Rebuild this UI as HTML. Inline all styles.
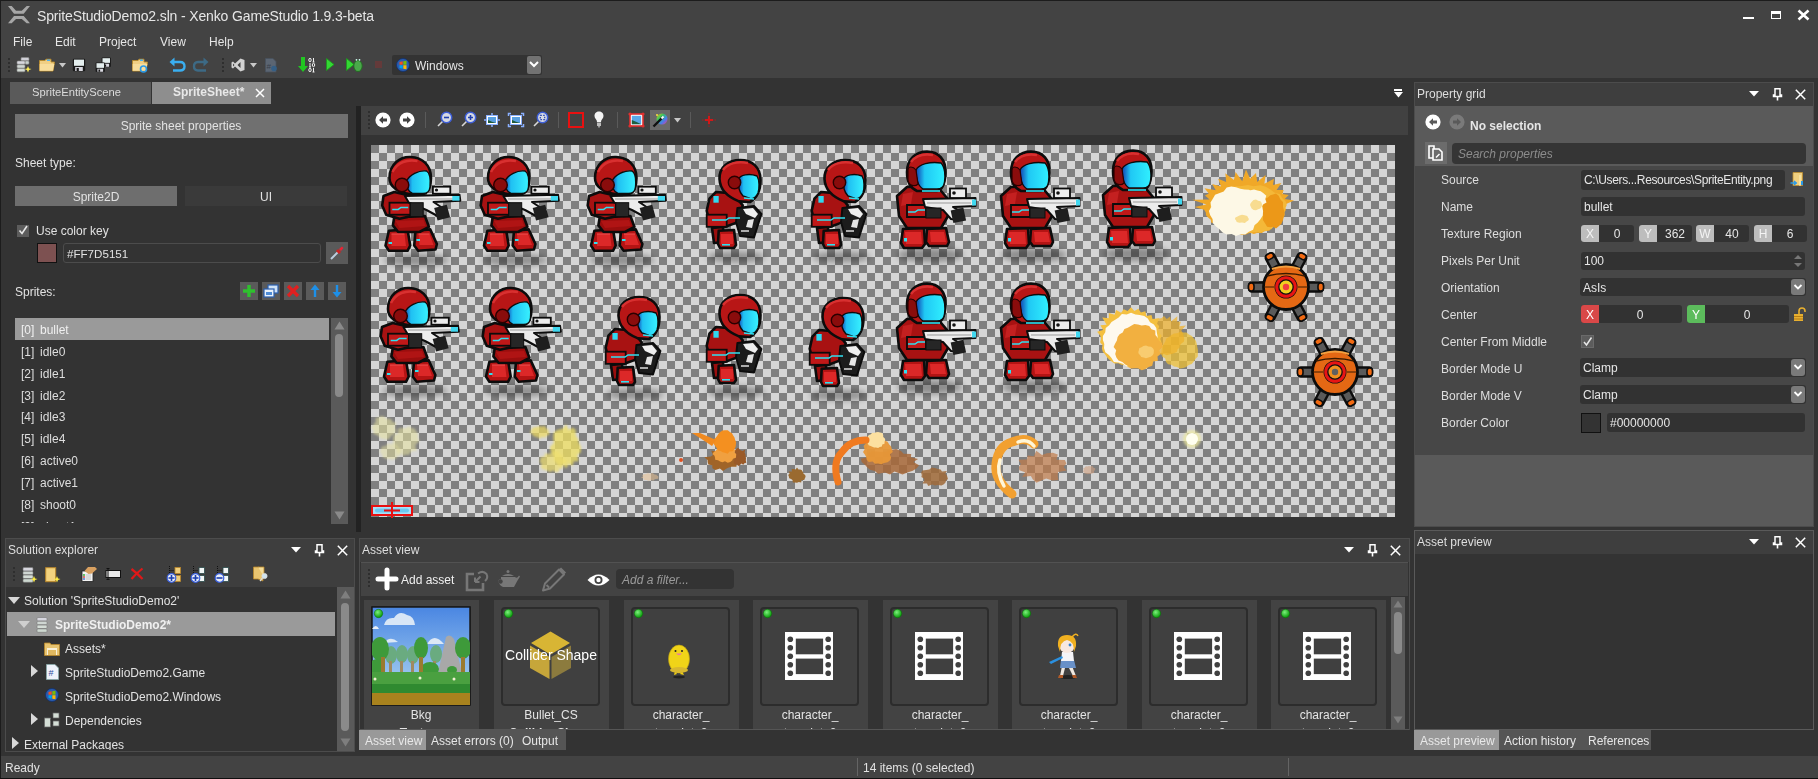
<!DOCTYPE html>
<html><head><meta charset="utf-8">
<style>
*{box-sizing:border-box;margin:0;padding:0}
html,body{width:1818px;height:779px;overflow:hidden;background:#333333;font-family:"Liberation Sans",sans-serif;font-size:12px;color:#e2e2e2;position:relative}
.a{position:absolute}
.t{position:absolute;white-space:nowrap;will-change:transform}
svg{position:absolute;overflow:visible}
</style></head><body>
<div class="a" style="left:0px;top:0px;width:1818px;height:78px;background:#434343;"></div>
<div class="a" style="left:0px;top:0px;width:1818px;height:1px;background:#1c1c1c;"></div>
<div class="a" style="left:0px;top:0px;width:1px;height:779px;background:#1c1c1c;"></div>
<div class="a" style="left:0px;top:778px;width:1818px;height:1px;background:#0e0e0e;"></div>
<svg style="left:0;top:0" width="40" height="30" viewBox="0 0 40 30"><path d="M8 6 H11.7 L16 10.8 H21.8 L26.7 6 H30 L23.7 13.8 H14Z M14 16 H23.7 L30 23.3 H26.7 L21.8 19 H16 L11.7 23.3 H8Z" fill="#a6a6a6"/></svg>
<div class="t" style="top:8.25px;font-size:14px;line-height:17px;color:#e6e6e6;left:37px;letter-spacing:-0.14px">SpriteStudioDemo2.sln - Xenko GameStudio 1.9.3-beta</div>
<div class="a" style="left:1743px;top:17px;width:11px;height:2px;background:#ffffff;"></div>
<div class="a" style="left:1771px;top:11px;width:10px;height:8px;background:transparent;border:1px solid #fff;border-top-width:3px"></div>
<svg style="left:1797px;top:9px" width="13" height="12" viewBox="0 0 13 12"><path d="M1.5 1.5 L11.5 10.5 M11.5 1.5 L1.5 10.5" stroke="#fff" stroke-width="2.6"/></svg>
<div class="t" style="top:34.84px;font-size:12px;line-height:14px;color:#e6e6e6;left:13px;">File</div>
<div class="t" style="top:34.84px;font-size:12px;line-height:14px;color:#e6e6e6;left:55px;">Edit</div>
<div class="t" style="top:34.84px;font-size:12px;line-height:14px;color:#e6e6e6;left:99px;">Project</div>
<div class="t" style="top:34.84px;font-size:12px;line-height:14px;color:#e6e6e6;left:160px;">View</div>
<div class="t" style="top:34.84px;font-size:12px;line-height:14px;color:#e6e6e6;left:209px;">Help</div>
<div class="a" style="left:1px;top:756px;width:1817px;height:22px;background:#434343;"></div>
<div class="a" style="left:857px;top:758px;width:1px;height:18px;background:#646464;"></div>
<div class="a" style="left:1288px;top:758px;width:1px;height:18px;background:#646464;"></div>
<div class="t" style="top:760.84px;font-size:12px;line-height:14px;color:#e2e2e2;left:5px;">Ready</div>
<div class="t" style="top:760.84px;font-size:12px;line-height:14px;color:#e2e2e2;left:863px;">14 items (0 selected)</div>
<div class="a" style="left:10px;top:82px;width:141px;height:22px;background:#5a5a5a;"></div>
<div class="a" style="left:152px;top:82px;width:119px;height:22px;background:#8e8e8e;"></div>
<div class="t" style="top:84.84px;font-size:12px;line-height:14px;color:#dcdcdc;left:32px;font-size:11.2px">SpriteEntityScene</div>
<div class="t" style="top:84.84px;font-size:12px;line-height:14px;color:#e8e8e8;font-weight:bold;left:173px;">SpriteSheet*</div>
<svg style="left:255px;top:88px" width="10" height="10" viewBox="0 0 10 10"><path d="M1 1 L9 9 M9 1 L1 9" stroke="#fff" stroke-width="1.5"/></svg>
<div class="a" style="left:1394px;top:89px;width:8px;height:2px;background:#ffffff;"></div>
<svg style="left:1394px;top:92px" width="9" height="6" viewBox="0 0 9 6"><path d="M0 0 H9 L4.5 5.5Z" fill="#fff"/></svg>
<div class="a" style="left:8px;top:58px;width:2px;height:2px;background:#2e2e2e;"></div>
<div class="a" style="left:8px;top:62px;width:2px;height:2px;background:#2e2e2e;"></div>
<div class="a" style="left:8px;top:66px;width:2px;height:2px;background:#2e2e2e;"></div>
<div class="a" style="left:8px;top:70px;width:2px;height:2px;background:#2e2e2e;"></div>
<svg style="left:16px;top:57px" width="16" height="16" viewBox="0 0 16 16">
<rect x="5" y="0.5" width="8" height="3.2" rx="1" fill="#cfcfd6" stroke="#888" stroke-width="0.6"/>
<rect x="9" y="4" width="4" height="3.2" rx="1" fill="#c9d2cf" stroke="#888" stroke-width="0.6"/>
<rect x="1" y="4" width="8" height="3.2" rx="1" fill="#d8d8de" stroke="#888" stroke-width="0.6"/>
<rect x="1" y="7.8" width="8" height="3.2" rx="1" fill="#cfd6d2" stroke="#888" stroke-width="0.6"/>
<rect x="1" y="11.6" width="8" height="3.2" rx="1" fill="#d4dcd6" stroke="#888" stroke-width="0.6"/>
<path d="M12 9 L13 11.5 L15.5 12 L13 13 L12 15.5 L11 13 L8.5 12 L11 11.5Z" fill="#ffee55"/>
</svg>
<svg style="left:39px;top:58px" width="16" height="14" viewBox="0 0 16 14"><path d="M0.5 2.5 H6 L7 1.2 H12 V4 H15.5 L14 13 H0.5Z" fill="#f0cf84" stroke="#b88a2a" stroke-width="0.9"/><path d="M0.7 6 H15.3 L14 12.8 H0.7Z" fill="#f7dd9c"/><rect x="8" y="1.5" width="3" height="1.5" fill="#4ab0f0"/></svg>
<svg style="left:59px;top:63px" width="7" height="5" viewBox="0 0 7 5"><path d="M0 0 H7 L3.5 4.5Z" fill="#c8c8c8"/></svg>
<svg style="left:72px;top:58px" width="14" height="14" viewBox="0 0 14 14"><rect x="0.8" y="0.8" width="12.4" height="12.4" rx="1.2" fill="#1a1a1a"/><rect x="2" y="1.6" width="10" height="6.2" fill="#e4eeee"/><rect x="3.2" y="9" width="7.6" height="4" fill="#d8d8e0"/><rect x="4.6" y="10" width="2.2" height="3" fill="#1a1a1a"/></svg>
<svg style="left:95px;top:57px" width="16" height="16" viewBox="0 0 16 16"><g transform="translate(6,0) scale(0.75)"><rect x="0.8" y="0.8" width="12.4" height="12.4" rx="1.2" fill="#1a1a1a"/><rect x="2" y="1.6" width="10" height="6.2" fill="#e4eeee"/><rect x="3.2" y="9" width="7.6" height="4" fill="#d8d8e0"/><rect x="4.6" y="10" width="2.2" height="3" fill="#1a1a1a"/></g><g transform="translate(0,5) scale(0.75)"><rect x="0.8" y="0.8" width="12.4" height="12.4" rx="1.2" fill="#1a1a1a"/><rect x="2" y="1.6" width="10" height="6.2" fill="#e4eeee"/><rect x="3.2" y="9" width="7.6" height="4" fill="#d8d8e0"/><rect x="4.6" y="10" width="2.2" height="3" fill="#1a1a1a"/></g></svg>
<svg style="left:132px;top:58px" width="16" height="15" viewBox="0 0 16 15"><path d="M0.5 2.5 H6 L7 1.2 H12 V4 H15.5 L14 13 H0.5Z" fill="#f0cf84" stroke="#b88a2a" stroke-width="0.9"/><path d="M0.7 6 H15.3 L14 12.8 H0.7Z" fill="#f7dd9c"/><rect x="8" y="1.5" width="3" height="1.5" fill="#4ab0f0"/><circle cx="11.5" cy="11" r="3" fill="none" stroke="#2a9ae8" stroke-width="1.6"/></svg>
<svg style="left:169px;top:57px" width="17" height="15" viewBox="0 0 17 15"><path d="M4 5 H11 Q15.5 5 15.5 9.5 Q15.5 13.5 11 13.5 H4" fill="none" stroke="#3aaef0" stroke-width="2.4"/><path d="M0.5 5 L5.5 0.5 V9.5Z" fill="#3aaef0"/></svg>
<svg style="left:193px;top:57px" width="16" height="15" viewBox="0 0 16 15"><path d="M12 5 H5 Q1 5 1 9.5 Q1 13.5 5 13.5 H13" fill="none" stroke="#3d6a85" stroke-width="2.4"/><path d="M15.5 5 L10.5 0.5 V9.5Z" fill="#3d6a85"/></svg>
<div class="a" style="left:222px;top:58px;width:2px;height:2px;background:#2e2e2e;"></div>
<div class="a" style="left:222px;top:62px;width:2px;height:2px;background:#2e2e2e;"></div>
<div class="a" style="left:222px;top:66px;width:2px;height:2px;background:#2e2e2e;"></div>
<div class="a" style="left:222px;top:70px;width:2px;height:2px;background:#2e2e2e;"></div>
<svg style="left:231px;top:58px" width="14" height="14" viewBox="0 0 14 14"><path d="M9.5 0.5 L13.5 2 V12 L9.5 13.5 L4 8.5 L2 10.5 L0.5 9.5 V4.5 L2 3.5 L4 5.5Z M9.5 4 L6.5 7 L9.5 10Z M2 5.5 V8.5 L3.5 7Z" fill="#d2d2d2" fill-rule="evenodd"/></svg>
<svg style="left:250px;top:63px" width="7" height="5" viewBox="0 0 7 5"><path d="M0 0 H7 L3.5 4.5Z" fill="#c8c8c8"/></svg>
<svg style="left:265px;top:58px" width="13" height="15" viewBox="0 0 13 15"><path d="M0.5 0.5 H8 L11 3.5 V14 H0.5Z" fill="#5b6572" stroke="#48525e" stroke-width="0.8"/><text x="1.5" y="11" font-size="8" font-family="Liberation Sans" fill="#38404a">#</text><circle cx="9" cy="10.5" r="2.8" fill="#345f86"/></svg>
<svg style="left:298px;top:57px" width="18" height="16" viewBox="0 0 18 16"><path d="M3 0 H7 V9 H10 L5 15 L0 9 H3Z" fill="#22c622"/><ellipse cx="12" cy="3" rx="1.2" ry="1.7" fill="none" stroke="#f0f0f0" stroke-width="1"/><path d="M15.5 1 V5 M14.5 5 H16.5" stroke="#f0f0f0" stroke-width="1"/><path d="M12 6 V10 M11 10 H13" stroke="#f0f0f0" stroke-width="1"/><ellipse cx="15.5" cy="8" rx="1.2" ry="1.7" fill="none" stroke="#f0f0f0" stroke-width="1"/><ellipse cx="12" cy="13" rx="1.2" ry="1.7" fill="none" stroke="#f0f0f0" stroke-width="1"/><path d="M15.5 11 V15 M14.5 15 H16.5" stroke="#f0f0f0" stroke-width="1"/></svg>
<svg style="left:326px;top:58px" width="9" height="13" viewBox="0 0 9 13"><path d="M0.5 0.5 L8 6.5 L0.5 12.5Z" fill="#34d834" stroke="#1a9a1a" stroke-width="0.8"/></svg>
<svg style="left:346px;top:58px" width="18" height="14" viewBox="0 0 18 14"><path d="M0.5 0.5 L8 6.5 L0.5 12.5Z" fill="#34d834" stroke="#1a9a1a" stroke-width="0.8"/><ellipse cx="12" cy="8" rx="4.2" ry="5.5" fill="#4aa84a" stroke="#1f6a1f" stroke-width="0.9"/><circle cx="10.5" cy="1.8" r="0.9" fill="#cfe"/><circle cx="13.5" cy="1.8" r="0.9" fill="#cfe"/></svg>
<div class="a" style="left:375px;top:61px;width:7px;height:7px;background:#643a3a;"></div>
<div class="a" style="left:392px;top:55px;width:150px;height:20px;background:#333333;border-radius:2px"></div>
<svg style="left:396px;top:58px" width="14" height="14" viewBox="0 0 14 14"><circle cx="7" cy="7" r="6.5" fill="#2a5db0" stroke="#12306a" stroke-width="0.8"/><path d="M3.5 4 L6.7 3.3 V6.7 H3.5Z" fill="#f25022"/><path d="M7.3 3.2 L10.5 2.8 V6.7 H7.3Z" fill="#7fba00"/><path d="M3.5 7.3 H6.7 V10.7 L3.5 10Z" fill="#00a4ef"/><path d="M7.3 7.3 H10.5 V11.2 L7.3 10.8Z" fill="#ffb900"/></svg>
<div class="t" style="top:58.84px;font-size:12px;line-height:14px;color:#e6e6e6;left:415px;">Windows</div>
<div class="a" style="left:527px;top:56px;width:14px;height:18px;background:#727272;border-radius:2px"></div>
<svg style="left:529px;top:61px" width="10" height="7" viewBox="0 0 10 7"><path d="M1 1 L5 5 L9 1" stroke="#fff" stroke-width="2" fill="none"/></svg>
<div class="a" style="left:15px;top:114px;width:333px;height:24px;background:#707070;"></div>
<div class="t" style="top:118.84px;font-size:12px;line-height:14px;color:#e2e2e2;left:-19px;width:400px;text-align:center;">Sprite sheet properties</div>
<div class="t" style="top:155.84px;font-size:12px;line-height:14px;color:#e2e2e2;left:15px;">Sheet type:</div>
<div class="a" style="left:15px;top:186px;width:162px;height:20px;background:#6e6e6e;"></div>
<div class="t" style="top:189.84px;font-size:12px;line-height:14px;color:#e2e2e2;left:-104px;width:400px;text-align:center;">Sprite2D</div>
<div class="a" style="left:185px;top:186px;width:162px;height:20px;background:#3a3a3a;"></div>
<div class="t" style="top:189.84px;font-size:12px;line-height:14px;color:#e2e2e2;left:66px;width:400px;text-align:center;">UI</div>
<div class="a" style="left:17px;top:225px;width:12px;height:12px;background:#5c5c5c;"></div>
<svg style="left:17px;top:224px" width="12" height="12" viewBox="0 0 12 12"><path d="M2.5 6.5 L5 9.5 L10 2" stroke="#e8e8e8" stroke-width="1.6" fill="none"/></svg>
<div class="t" style="top:223.84px;font-size:12px;line-height:14px;color:#e2e2e2;left:36px;">Use color key</div>
<div class="a" style="left:37px;top:243px;width:20px;height:20px;background:#7d5151;border:1px solid #111"></div>
<div class="a" style="left:63px;top:243px;width:258px;height:20px;background:#333333;border:1px solid #4c4c4c;border-radius:3px"></div>
<div class="t" style="top:246.84px;font-size:12px;line-height:14px;color:#e2e2e2;left:67px;font-size:11.6px">#FF7D5151</div>
<div class="a" style="left:326px;top:242px;width:22px;height:22px;background:#5a5a5a;"></div>
<svg style="left:329px;top:245px" width="16" height="16" viewBox="0 0 16 16"><path d="M2 14 L9 7" stroke="#bcd" stroke-width="2"/><path d="M8 5 L11 8" stroke="#c22" stroke-width="3"/><path d="M10 4 L13 1.5 L14.5 3 L12 6Z" fill="#e23"/></svg>
<div class="t" style="top:284.84px;font-size:12px;line-height:14px;color:#e2e2e2;left:15px;">Sprites:</div>
<div class="a" style="left:240px;top:282px;width:18px;height:18px;background:#5a5a5a;"></div>
<div class="a" style="left:262px;top:282px;width:18px;height:18px;background:#5a5a5a;"></div>
<div class="a" style="left:284px;top:282px;width:18px;height:18px;background:#5a5a5a;"></div>
<div class="a" style="left:306px;top:282px;width:18px;height:18px;background:#5a5a5a;"></div>
<div class="a" style="left:328px;top:282px;width:18px;height:18px;background:#5a5a5a;"></div>
<svg style="left:240px;top:282px" width="18" height="18" viewBox="0 0 18 18"><path d="M9 3 V15 M3 9 H15" stroke="#2ec02e" stroke-width="3.5"/></svg>
<svg style="left:262px;top:282px" width="18" height="18" viewBox="0 0 18 18"><rect x="6" y="3" width="10" height="8" fill="#cfe2f7" stroke="#2a5fb0" stroke-width="1.2"/><rect x="2" y="7" width="10" height="8" fill="#e8f1fb" stroke="#2a5fb0" stroke-width="1.2"/><rect x="4" y="10" width="6" height="3" fill="#4d8bd6"/></svg>
<svg style="left:284px;top:282px" width="18" height="18" viewBox="0 0 18 18"><path d="M4 4 L14 14 M14 4 L4 14" stroke="#e02020" stroke-width="3.2"/></svg>
<svg style="left:306px;top:282px" width="18" height="18" viewBox="0 0 18 18"><path d="M9 15 V6" stroke="#1e90e8" stroke-width="2.4"/><path d="M4.5 8 L9 2.5 L13.5 8Z" fill="#1e90e8"/></svg>
<svg style="left:328px;top:282px" width="18" height="18" viewBox="0 0 18 18"><path d="M9 3 V12" stroke="#1e90e8" stroke-width="2.4"/><path d="M4.5 10 L9 15.5 L13.5 10Z" fill="#1e90e8"/></svg>
<div class="a" style="left:15px;top:318px;width:314px;height:22px;background:#9a9a9a;"></div>
<div class="t" style="top:322.84px;font-size:12px;line-height:14px;color:#f0f0f0;left:21px;">[0]</div>
<div class="t" style="top:322.84px;font-size:12px;line-height:14px;color:#f0f0f0;left:40px;">bullet</div>
<div class="t" style="top:344.74px;font-size:12px;line-height:14px;color:#dedede;left:21px;">[1]</div>
<div class="t" style="top:344.74px;font-size:12px;line-height:14px;color:#dedede;left:40px;">idle0</div>
<div class="t" style="top:366.64px;font-size:12px;line-height:14px;color:#dedede;left:21px;">[2]</div>
<div class="t" style="top:366.64px;font-size:12px;line-height:14px;color:#dedede;left:40px;">idle1</div>
<div class="t" style="top:388.54px;font-size:12px;line-height:14px;color:#dedede;left:21px;">[3]</div>
<div class="t" style="top:388.54px;font-size:12px;line-height:14px;color:#dedede;left:40px;">idle2</div>
<div class="t" style="top:410.44px;font-size:12px;line-height:14px;color:#dedede;left:21px;">[4]</div>
<div class="t" style="top:410.44px;font-size:12px;line-height:14px;color:#dedede;left:40px;">idle3</div>
<div class="t" style="top:432.34px;font-size:12px;line-height:14px;color:#dedede;left:21px;">[5]</div>
<div class="t" style="top:432.34px;font-size:12px;line-height:14px;color:#dedede;left:40px;">idle4</div>
<div class="t" style="top:454.24px;font-size:12px;line-height:14px;color:#dedede;left:21px;">[6]</div>
<div class="t" style="top:454.24px;font-size:12px;line-height:14px;color:#dedede;left:40px;">active0</div>
<div class="t" style="top:476.14px;font-size:12px;line-height:14px;color:#dedede;left:21px;">[7]</div>
<div class="t" style="top:476.14px;font-size:12px;line-height:14px;color:#dedede;left:40px;">active1</div>
<div class="t" style="top:498.04px;font-size:12px;line-height:14px;color:#dedede;left:21px;">[8]</div>
<div class="t" style="top:498.04px;font-size:12px;line-height:14px;color:#dedede;left:40px;">shoot0</div>
<div class="t" style="top:519.94px;font-size:12px;line-height:14px;color:#dedede;left:21px;">[9]</div>
<div class="t" style="top:519.94px;font-size:12px;line-height:14px;color:#dedede;left:40px;">shoot1</div>
<div class="a" style="left:8px;top:523px;width:322px;height:14px;background:#333333;"></div>
<div class="a" style="left:331px;top:318px;width:17px;height:206px;background:#5a5a5a;"></div>
<svg style="left:334px;top:321px" width="11" height="9" viewBox="0 0 11 9"><path d="M0.5 8.5 L5.5 0.5 L10.5 8.5Z" fill="#8a8a8a"/></svg>
<svg style="left:334px;top:511px" width="11" height="9" viewBox="0 0 11 9"><path d="M0.5 0.5 L5.5 8.5 L10.5 0.5Z" fill="#8a8a8a"/></svg>
<div class="a" style="left:335px;top:334px;width:8px;height:63px;background:#8a8a8a;border-radius:4px"></div>
<div class="a" style="left:356px;top:106px;width:5px;height:426px;background:#222222;"></div>
<div class="a" style="left:361px;top:106px;width:1047px;height:29px;background:#414141;"></div>
<div class="a" style="left:371px;top:145px;width:1024px;height:372px;background:#d3d3d3;background:conic-gradient(#d5d5d5 0 25%,#808080 0 50%,#d5d5d5 0 75%,#808080 0) 0 0/16px 16px"></div>
<div class="a" style="left:368px;top:111px;width:2px;height:2px;background:#2e2e2e;"></div>
<div class="a" style="left:368px;top:115px;width:2px;height:2px;background:#2e2e2e;"></div>
<div class="a" style="left:368px;top:119px;width:2px;height:2px;background:#2e2e2e;"></div>
<div class="a" style="left:368px;top:123px;width:2px;height:2px;background:#2e2e2e;"></div>
<div class="a" style="left:368px;top:127px;width:2px;height:2px;background:#2e2e2e;"></div>
<svg style="left:375px;top:112px" width="16" height="16" viewBox="0 0 16 16"><circle cx="8" cy="8" r="7.6" fill="#ffffff"/><path d="M4 8 L8 4.2 V6.6 H12 V9.4 H8 V11.8Z" fill="#414141"/></svg>
<svg style="left:399px;top:112px" width="16" height="16" viewBox="0 0 16 16"><circle cx="8" cy="8" r="7.6" fill="#ffffff"/><path d="M12 8 L8 4.2 V6.6 H4 V9.4 H8 V11.8Z" fill="#414141"/></svg>
<div class="a" style="left:425px;top:112px;width:1px;height:16px;background:#5a5a5a;"></div>
<svg style="left:437px;top:111px" width="16" height="16" viewBox="0 0 16 16"><path d="M1 15 L6 10" stroke="#d8d8d8" stroke-width="1.6"/><circle cx="9.5" cy="6.5" r="5.2" fill="#d6d9e3" stroke="#3e5fd8" stroke-width="1.5"/><path d="M7 6.5 H12" stroke="#2040b0" stroke-width="1.6"/></svg>
<svg style="left:461px;top:111px" width="16" height="16" viewBox="0 0 16 16"><path d="M1 15 L6 10" stroke="#d8d8d8" stroke-width="1.6"/><circle cx="9.5" cy="6.5" r="5.2" fill="#d6d9e3" stroke="#3e5fd8" stroke-width="1.5"/><path d="M7 6.5 H12 M9.5 4 V9" stroke="#2040b0" stroke-width="1.6"/></svg>
<svg style="left:484px;top:113px" width="16" height="14" viewBox="0 0 16 14"><rect x="2.5" y="2.5" width="11" height="9" fill="#fff" stroke="#8ab0ff" stroke-width="1"/><path d="M4 4 H12 V10 H4Z" fill="#5aa0e0"/><path d="M4 7 Q8 9 12 10 H4Z" fill="#1f5a3a"/><path d="M8 0 V2.5 M8 11.5 V14 M0 7 H2.5 M13.5 7 H16" stroke="#8ab0ff" stroke-width="1.5"/></svg>
<svg style="left:508px;top:113px" width="16" height="14" viewBox="0 0 16 14"><rect x="2.5" y="2.5" width="11" height="9" fill="#fff" stroke="#8ab0ff" stroke-width="1"/><path d="M4 4 H12 V10 H4Z" fill="#5aa0e0"/><path d="M4 7 Q8 9 12 10 H4Z" fill="#1f5a3a"/><path d="M0.5 3 V0.5 H3 M13 0.5 H15.5 V3 M0.5 11 V13.5 H3 M13 13.5 H15.5 V11" stroke="#8ab0ff" stroke-width="1.5" fill="none"/></svg>
<svg style="left:533px;top:111px" width="16" height="16" viewBox="0 0 16 16"><path d="M1 15 L6 10" stroke="#d8d8d8" stroke-width="1.6"/><circle cx="9.5" cy="6.5" r="5.2" fill="#d6d9e3" stroke="#3e5fd8" stroke-width="1.5"/><rect x="7.3" y="4.3" width="4.4" height="4.4" fill="none" stroke="#2040b0" stroke-width="1.2" stroke-dasharray="1.5 1.4"/></svg>
<div class="a" style="left:558px;top:112px;width:1px;height:16px;background:#5a5a5a;"></div>
<div class="a" style="left:568px;top:112px;width:16px;height:16px;background:transparent;border:2px solid #e81010"></div>
<svg style="left:594px;top:111px" width="10" height="17" viewBox="0 0 10 17"><path d="M5 0.5 C8.5 0.5 9.5 3 9.5 5 C9.5 7.5 7 8.5 7 11 H3 C3 8.5 0.5 7.5 0.5 5 C0.5 3 1.5 0.5 5 0.5Z" fill="#f4f4f4"/><rect x="3" y="11.5" width="4" height="3.5" fill="#bbb"/><rect x="4" y="15" width="2" height="1.5" fill="#999"/></svg>
<div class="a" style="left:617px;top:112px;width:1px;height:16px;background:#5a5a5a;"></div>
<svg style="left:628px;top:112px" width="17" height="16" viewBox="0 0 17 16"><rect x="2" y="2" width="13" height="12" fill="#fff" stroke="#e03030" stroke-width="1.6"/><path d="M3.8 3.8 H13.2 V12.2 H3.8Z" fill="#5aa8e8"/><path d="M3.8 8 Q9 10 13.2 12.2 H3.8Z" fill="#1e5f40"/><circle cx="2" cy="2" r="1.6" fill="#e03030"/><circle cx="15" cy="2" r="1.6" fill="#e03030"/><circle cx="2" cy="14" r="1.6" fill="#e03030"/><circle cx="15" cy="14" r="1.6" fill="#e03030"/></svg>
<div class="a" style="left:650px;top:110px;width:20px;height:20px;background:#6a6a6a;"></div>
<svg style="left:652px;top:112px" width="16" height="16" viewBox="0 0 16 16"><defs><linearGradient id="rb" x1="0" y1="0" x2="1" y2="1"><stop offset="0" stop-color="#ffd000"/><stop offset="0.35" stop-color="#30d060"/><stop offset="0.65" stop-color="#4080ff"/><stop offset="1" stop-color="#ff3090"/></linearGradient></defs><circle cx="10" cy="7" r="5.5" fill="url(#rb)" opacity="0.9"/><path d="M1.5 14.5 L11 5" stroke="#111" stroke-width="2.4"/><path d="M9.5 6.5 L11.5 4.5" stroke="#fff" stroke-width="2"/><circle cx="5" cy="3" r="1" fill="#ffe040"/></svg>
<svg style="left:674px;top:118px" width="7" height="5" viewBox="0 0 7 5"><path d="M0 0 H7 L3.5 4.5Z" fill="#c8c8c8"/></svg>
<div class="a" style="left:690px;top:112px;width:1px;height:16px;background:#5a5a5a;"></div>
<svg style="left:701px;top:112px" width="16" height="16" viewBox="0 0 16 16"><path d="M8 1 V15 M1 8 H15" stroke="#b01818" stroke-width="1" stroke-dasharray="1.5 1"/><path d="M8 4 V12 M4 8 H12" stroke="#d01818" stroke-width="2"/></svg>
<svg style="left:371px;top:145px" width="1024" height="372" viewBox="0 0 1024 372"><defs><filter id="blur" x="-50%" y="-200%" width="200%" height="500%"><feGaussianBlur stdDeviation="3"/></filter><filter id="blur2"><feGaussianBlur stdDeviation="1.2"/></filter><linearGradient id="vis2" x1="0" y1="0" x2="1" y2="0"><stop offset="0" stop-color="#1040b0"/><stop offset="0.3" stop-color="#20c8f4"/><stop offset="1" stop-color="#30f0ff"/></linearGradient><symbol id="shoot" viewBox="0 0 90 110" width="90" height="110" overflow="visible">
<ellipse cx="37" cy="108" rx="33" ry="6" fill="#000" opacity="0.32" filter="url(#blur)"/>
<g stroke="#0c0c0c" stroke-width="2.6" stroke-linejoin="round">
<path d="M9.4 78.8 L28 77.4 L30.7 93.5 L28 98.8 L9.4 98.8 L6 93.5Z" fill="#b41414"/>
<path d="M36 78.8 L50.7 77.4 L57.4 92 L56 97.5 L38.7 98.8 L34.7 93.5Z" fill="#b41414"/>
<path d="M14.7 65.4 L45.4 64 L49.4 74.8 L40 80 L18.7 80 L13.4 73.4Z" fill="#9a0e0e"/>
<path d="M4 44 L14.7 40 L26.7 42.7 L32 50.7 L32 64 L20 66.8 L6.7 62.7 L2.7 53.4Z" fill="#a81212"/>
<path d="M10 26 C10 12 21 4.5 31 5 C43 5.5 51.5 13 51.5 26 C51.5 35 48.5 41 44 42 L30 42 C19 40.5 10 35 10 26Z" fill="#b81616"/>
</g>
<path d="M13 20 C18 10 28 7 38 9" stroke="#d83030" stroke-width="2.5" fill="none"/>
<defs><linearGradient id="vis" x1="0" y1="0" x2="1" y2="0"><stop offset="0" stop-color="#1048b8"/><stop offset="0.25" stop-color="#20c0f2"/><stop offset="1" stop-color="#38f2ff"/></linearGradient></defs>
<path d="M27 29 C30 23 39 18 47 19 C50.5 21 51 29 50.5 35 C50 39.5 47.5 41.5 43.5 41.5 L33 41.5 C29 40 26.5 35 27 29Z" fill="url(#vis)" stroke="#0c0c0c" stroke-width="1.4"/>
<circle cx="22.5" cy="33" r="6.8" fill="#8a0c0c" stroke="#2a0000" stroke-width="1.4"/>
<path d="M12 82 H25 L26.5 94 H12Z M39 82 H50 L54 93 H40Z" fill="#dc2828"/>
<path d="M12 82 H25 M39 82 H50" stroke="#f05050" stroke-width="1.2"/>
<path d="M16 69 L44 68 L46 74 L20 76Z" fill="#b01414"/>
<rect x="10" y="50.7" width="21" height="12" fill="#c01818" stroke="#0c0c0c" stroke-width="1.8"/>
<path d="M12.7 57.4 H18.7 L21.4 55.4 H28.7" stroke="#30e0f0" stroke-width="1.5" fill="none"/>
<path d="M25.4 44 L80 42.7 L80.8 48.7 L54 50 L63 56 L58 64 L47 58 L29.4 50.7Z" fill="#ececec" stroke="#0c0c0c" stroke-width="2" stroke-linejoin="round"/>
<path d="M30 47 H76" stroke="#999" stroke-width="1"/>
<rect x="53.4" y="34.7" width="17.4" height="7" fill="#eeeeee" stroke="#0c0c0c" stroke-width="1.8"/>
<circle cx="57" cy="38" r="1.6" fill="#111"/>
<rect x="72.8" y="44" width="7.2" height="4.7" fill="#40d8f0"/>
<rect x="30.7" y="50.7" width="13" height="14" fill="#262626" stroke="#0c0c0c" stroke-width="1"/>
<rect x="56" y="54" width="13" height="13" fill="#1e1e1e" transform="rotate(-15 63 60)"/>
<rect x="9" y="90" width="3.5" height="2" fill="#30e0f0"/><rect x="37" y="87" width="3.5" height="2" fill="#30e0f0"/>
</symbol><symbol id="shoot2" viewBox="0 0 90 110" width="90" height="110" overflow="visible">
<ellipse cx="37" cy="109" rx="33" ry="7" fill="#000" opacity="0.34" filter="url(#blur)"/>
<g stroke="#0c0c0c" stroke-width="2.6" stroke-linejoin="round">
<path d="M10 83 L31 82 L32 98 L29 102 L11 102 L8 97Z" fill="#b41414"/>
<path d="M34 83 L53 82 L56 96 L54 100 L36 100 L33 96Z" fill="#b41414"/>
<path d="M4 50 L14 41 L44 40 L54 52 L55 70 L48 82 L14 82 L6 70Z" fill="#a81212"/>
<path d="M14 26 C14 13 23 5.6 34 5.6 C46 5.6 53 14 52.5 27 C52 36 50 44 44 45 L24 45 C17 42 14 35 14 26Z" fill="#b81616"/>
</g>
<path d="M18 16 C23 9 31 7.5 40 9" stroke="#d83030" stroke-width="2.5" fill="none"/>
<path d="M23 24 C26 18 37 15.5 48 17 C52 21 52.5 30 51.5 36 C51 40 48.5 43 44 43 L30 43 C25 40 22.5 32 23 24Z" fill="url(#vis2)" stroke="#0c0c0c" stroke-width="1.4"/>
<path d="M29 45 H47" stroke="#30e0f0" stroke-width="1.6"/>
<path d="M15 24 C15 20 20 20 23 24 L25 38 C22 41 16 40 15 34Z" fill="#8a0c0c" stroke="#2a0000" stroke-width="1.2"/>
<path d="M12 86 H28 L29 98 H13Z M37 86 H51 L53 96 H38Z" fill="#dc2828"/>
<rect x="11" y="92" width="3" height="3.5" fill="#30e0f0"/>
<path d="M10 48 L20 46 L18 58 L8 60Z" fill="#c42020"/>
<path d="M14 59 H33 V71 H14Z" fill="#c01818" stroke="#0c0c0c" stroke-width="1.8"/>
<path d="M15 66 H22 L25 64 H32" stroke="#30e0f0" stroke-width="1.5" fill="none"/>
<path d="M30 53 L82.5 52 L82.5 60 L60 61 L68 66 L66 74 L58 73 L50 64 L32 61Z" fill="#ececec" stroke="#0c0c0c" stroke-width="2" stroke-linejoin="round"/>
<path d="M34 57 H78" stroke="#999" stroke-width="1"/>
<rect x="57" y="42.5" width="16" height="9.5" fill="#eeeeee" stroke="#0c0c0c" stroke-width="1.8"/>
<circle cx="61" cy="47" r="1.8" fill="#111"/>
<rect x="79" y="53.5" width="4" height="6" fill="#40d8f0"/>
<rect x="33" y="62" width="15" height="10" fill="#262626" stroke="#0c0c0c" stroke-width="1"/>
<rect x="59" y="63" width="13" height="13" fill="#1e1e1e" transform="rotate(-12 65 70)"/>
</symbol><symbol id="run" viewBox="0 0 80 110" width="80" height="110" overflow="visible">
<ellipse cx="40" cy="105" rx="29" ry="5.5" fill="#000" opacity="0.32" filter="url(#blur)"/>
<g stroke="#0c0c0c" stroke-width="2.6" stroke-linejoin="round">
<path d="M16 76 L27 75 L28 90 L18 91Z" fill="#9a0e0e"/>
<path d="M22.7 78.8 L38 78 L40 93 L38 96 L24 96 L22 92Z" fill="#b41414"/>
<path d="M13.4 46.7 L20 40 L37.4 41.4 L46.7 53.4 L44 69.4 L29.4 74.8 L13.4 69.4 L10.7 58.7Z" fill="#a81212"/>
<path d="M23.5 27 C23 15 33 8 44 8 C56 8 64.5 15 64.5 28 C64.5 38 61 46 54 50 L43 49.4 C32 45 24 38 23.5 27Z" fill="#b81616"/>
</g>
<path d="M27 18 C32 11 42 9 52 11" stroke="#d83030" stroke-width="2.5" fill="none"/>
<path d="M42.7 27 C44 23 53 21 61 24 C63.5 28 63.5 36 62 41 C60 45 57 47 54 46.5 L47 44 C43 40 42 33 42.7 27Z" fill="url(#vis)" stroke="#0c0c0c" stroke-width="1.4"/>
<circle cx="38.5" cy="30.5" r="6.2" fill="#8a0c0c" stroke="#2a0000" stroke-width="1.4"/>
<rect x="17.4" y="44" width="5.3" height="6.7" fill="#30d8f0"/>
<path d="M48 46 L58 47" stroke="#30e0f0" stroke-width="1.4"/>
<path d="M41.4 56 L58 54 L65.4 62 L58 85.4 L44 84 L40 70Z" fill="#1c1c1c" stroke="#0c0c0c" stroke-width="2" stroke-linejoin="round"/>
<path d="M47 57 L57 56 L62 62 L59 66 L50 62Z" fill="#efefef"/>
<path d="M52 68 L58 67 L56 76 L50 75Z" fill="#e4e4e4"/>
<path d="M45 79 H53" stroke="#ddd" stroke-width="1.5"/>
<rect x="10.7" y="62.7" width="20" height="12.1" fill="#c01818" stroke="#0c0c0c" stroke-width="1.8"/>
<rect x="25" y="82" width="12" height="10" fill="#dc2828"/>
<path d="M16 68 H30 L33 66 H44" stroke="#30e0f0" stroke-width="1.4" fill="none"/>
<rect x="26" y="92" width="8" height="1.6" fill="#30e0f0"/>
</symbol><symbol id="orb" viewBox="-40 -36 80 72" width="80" height="72" overflow="visible"><g transform="rotate(0)"><rect x="17" y="-4.5" width="20" height="9" rx="3" fill="#5a5a5a" stroke="#0c0c0c" stroke-width="2.4"/><rect x="32" y="-4" width="5.5" height="8" rx="2.7" fill="#f26a12" stroke="#0c0c0c" stroke-width="1.6"/></g><g transform="rotate(180)"><rect x="17" y="-4.5" width="20" height="9" rx="3" fill="#5a5a5a" stroke="#0c0c0c" stroke-width="2.4"/><rect x="32" y="-4" width="5.5" height="8" rx="2.7" fill="#f26a12" stroke="#0c0c0c" stroke-width="1.6"/></g><g transform="rotate(-62)"><rect x="17" y="-4.5" width="20" height="9" rx="3" fill="#5a5a5a" stroke="#0c0c0c" stroke-width="2.4"/><rect x="32" y="-4" width="5.5" height="8" rx="2.7" fill="#f26a12" stroke="#0c0c0c" stroke-width="1.6"/></g><g transform="rotate(-118)"><rect x="17" y="-4.5" width="20" height="9" rx="3" fill="#5a5a5a" stroke="#0c0c0c" stroke-width="2.4"/><rect x="32" y="-4" width="5.5" height="8" rx="2.7" fill="#f26a12" stroke="#0c0c0c" stroke-width="1.6"/></g><g transform="rotate(62)"><rect x="17" y="-4.5" width="20" height="9" rx="3" fill="#5a5a5a" stroke="#0c0c0c" stroke-width="2.4"/><rect x="32" y="-4" width="5.5" height="8" rx="2.7" fill="#f26a12" stroke="#0c0c0c" stroke-width="1.6"/></g><g transform="rotate(118)"><rect x="17" y="-4.5" width="20" height="9" rx="3" fill="#5a5a5a" stroke="#0c0c0c" stroke-width="2.4"/><rect x="32" y="-4" width="5.5" height="8" rx="2.7" fill="#f26a12" stroke="#0c0c0c" stroke-width="1.6"/></g><circle cx="0" cy="0" r="22.5" fill="#e46814" stroke="#0c0c0c" stroke-width="2.8"/><path d="M-19 -11 Q0 -16 19 -11" stroke="#3a1a00" stroke-width="1.4" fill="none"/><path d="M-22 0 H-12 M12 0 H22" stroke="#3a1a00" stroke-width="1.2"/><path d="M-14 -18 Q0 -23 14 -18" stroke="#f4a040" stroke-width="2" fill="none"/><circle cx="0" cy="0" r="11.5" fill="#111"/><circle cx="0" cy="0" r="9.3" fill="none" stroke="#e81414" stroke-width="3"/><circle cx="0" cy="0" r="6.5" fill="#f0d020"/><circle cx="0" cy="0" r="3.2" fill="#f04040"/></symbol><symbol id="orb2" viewBox="-40 -36 80 72" width="80" height="72" overflow="visible"><g transform="rotate(0)"><rect x="17" y="-4.5" width="20" height="9" rx="3" fill="#5a5a5a" stroke="#0c0c0c" stroke-width="2.4"/><rect x="32" y="-4" width="5.5" height="8" rx="2.7" fill="#f26a12" stroke="#0c0c0c" stroke-width="1.6"/></g><g transform="rotate(180)"><rect x="17" y="-4.5" width="20" height="9" rx="3" fill="#5a5a5a" stroke="#0c0c0c" stroke-width="2.4"/><rect x="32" y="-4" width="5.5" height="8" rx="2.7" fill="#f26a12" stroke="#0c0c0c" stroke-width="1.6"/></g><g transform="rotate(-62)"><rect x="17" y="-4.5" width="20" height="9" rx="3" fill="#5a5a5a" stroke="#0c0c0c" stroke-width="2.4"/><rect x="32" y="-4" width="5.5" height="8" rx="2.7" fill="#f26a12" stroke="#0c0c0c" stroke-width="1.6"/></g><g transform="rotate(-118)"><rect x="17" y="-4.5" width="20" height="9" rx="3" fill="#5a5a5a" stroke="#0c0c0c" stroke-width="2.4"/><rect x="32" y="-4" width="5.5" height="8" rx="2.7" fill="#f26a12" stroke="#0c0c0c" stroke-width="1.6"/></g><g transform="rotate(62)"><rect x="17" y="-4.5" width="20" height="9" rx="3" fill="#5a5a5a" stroke="#0c0c0c" stroke-width="2.4"/><rect x="32" y="-4" width="5.5" height="8" rx="2.7" fill="#f26a12" stroke="#0c0c0c" stroke-width="1.6"/></g><g transform="rotate(118)"><rect x="17" y="-4.5" width="20" height="9" rx="3" fill="#5a5a5a" stroke="#0c0c0c" stroke-width="2.4"/><rect x="32" y="-4" width="5.5" height="8" rx="2.7" fill="#f26a12" stroke="#0c0c0c" stroke-width="1.6"/></g><circle cx="0" cy="0" r="22.5" fill="#e46814" stroke="#0c0c0c" stroke-width="2.8"/><path d="M-19 -11 Q0 -16 19 -11" stroke="#3a1a00" stroke-width="1.4" fill="none"/><path d="M-22 0 H-12 M12 0 H22" stroke="#3a1a00" stroke-width="1.2"/><path d="M-14 -18 Q0 -23 14 -18" stroke="#f4a040" stroke-width="2" fill="none"/><circle cx="0" cy="0" r="11.5" fill="#111"/><circle cx="0" cy="0" r="9.3" fill="none" stroke="#e81414" stroke-width="3"/><circle cx="0" cy="0" r="6.5" fill="#f09020"/><circle cx="0" cy="0" r="3.2" fill="#606060"/></symbol></defs><use href="#shoot" x="8.5" y="7" width="90" height="110"/><use href="#shoot" x="107" y="7" width="90" height="110"/><use href="#shoot" x="214" y="7" width="90" height="110"/><use href="#shoot" x="7" y="138" width="90" height="110"/><use href="#shoot" x="109" y="138" width="90" height="110"/><use href="#shoot2" x="522" y="1" width="90" height="110"/><use href="#shoot2" x="626" y="1" width="90" height="110"/><use href="#shoot2" x="728" y="0" width="90" height="110"/><use href="#shoot2" x="522" y="133" width="90" height="110"/><use href="#shoot2" x="626" y="133" width="90" height="110"/><use href="#run" x="325" y="7" width="80" height="110"/><use href="#run" x="430" y="7" width="80" height="110"/><use href="#run" x="224" y="144" width="80" height="110"/><use href="#run" x="325" y="142" width="80" height="110"/><use href="#run" x="428" y="145" width="80" height="110"/><use href="#orb" x="875" y="106" width="80" height="72"/><use href="#orb2" x="924" y="191" width="80" height="72"/><g transform="translate(831,28)"><path d="M82.7 34.0 L84.0 36.7 L82.6 39.2 L82.8 41.9 L81.5 44.5 L77.4 46.1 L75.3 48.1 L76.2 51.8 L71.5 52.5 L68.6 54.2 L67.5 57.8 L62.8 57.7 L59.9 60.0 L55.6 59.8 L51.9 60.9 L47.8 59.7 L44.0 61.4 L39.9 62.1 L36.2 60.6 L32.1 60.6 L28.4 59.5 L26.1 56.6 L21.1 57.1 L18.3 55.1 L16.4 52.6 L14.8 50.2 L9.3 49.7 L8.8 46.7 L6.1 44.6 L4.0 42.2 L3.8 39.4 L2.2 36.8 L-7.5 34.0 L4.5 31.4 L-9.8 26.8 L7.6 26.5 L3.0 22.5 L6.8 20.6 L2.5 15.3 L13.8 17.3 L10.1 11.1 L19.1 13.5 L16.1 5.8 L24.2 9.0 L23.3 0.2 L31.9 7.1 L33.6 -1.1 L40.2 8.2 L44.0 -3.4 L48.1 5.8 L54.0 -0.1 L55.2 9.1 L63.6 2.0 L62.4 10.8 L72.0 5.7 L70.9 11.9 L79.4 10.1 L74.6 17.1 L81.6 17.0 L80.4 20.9 L86.7 22.1 L82.8 26.1 L92.1 27.5 L83.0 31.4Z" fill="#f0a828"/><path d="M83.0 36.0 L82.0 39.6 L81.8 43.3 L78.7 46.5 L75.4 49.5 L72.6 52.8 L69.3 56.2 L63.8 58.0 L58.1 59.4 L51.8 59.0 L46.0 60.1 L40.2 59.2 L34.6 58.1 L29.4 56.5 L24.3 54.9 L18.0 53.7 L14.2 50.6 L11.1 47.2 L8.8 43.6 L9.6 39.6 L8.7 36.0 L8.0 32.2 L9.0 28.4 L10.9 24.7 L14.1 21.4 L20.2 19.7 L23.4 16.4 L28.5 14.2 L34.3 13.2 L40.2 13.1 L46.0 12.1 L51.7 13.3 L58.3 12.2 L63.9 13.8 L68.4 16.5 L72.3 19.4 L78.0 21.3 L80.1 25.0 L83.5 28.3 L84.8 32.1Z" fill="#f4b838"/><path d="M82.2 38.0 L82.0 42.6 L81.0 46.9 L79.3 50.9 L76.7 53.3 L74.0 55.5 L71.0 53.7 L68.2 54.3 L65.1 53.8 L63.0 50.3 L60.9 47.0 L61.0 42.1 L60.1 38.0 L60.8 33.8 L61.4 29.4 L63.1 25.8 L65.9 24.4 L68.3 22.3 L71.0 21.6 L74.0 20.5 L76.7 22.7 L78.4 26.6 L81.0 29.1 L81.0 33.9Z" fill="#ec9818"/><path d="M61.1 38.0 L60.8 42.4 L58.4 46.2 L55.8 49.6 L52.5 52.3 L51.1 56.8 L46.9 58.7 L43.2 61.4 L38.4 61.2 L34.0 62.9 L29.6 60.9 L24.7 61.5 L20.6 59.5 L17.5 56.2 L14.0 53.5 L10.9 50.3 L10.6 45.9 L8.2 42.2 L6.9 38.0 L9.2 34.0 L8.5 29.4 L10.9 25.7 L13.1 21.8 L17.7 20.0 L21.7 18.4 L24.7 14.5 L29.3 13.4 L34.0 14.2 L38.3 15.7 L42.5 16.4 L47.2 16.8 L50.2 20.2 L55.2 21.6 L56.8 25.9 L57.4 30.1 L60.2 33.7Z" fill="#fdf8e6"/><path d="M63.3 26.0 L64.5 29.4 L61.0 31.4 L59.3 34.4 L55.4 34.7 L52.0 35.5 L47.9 36.5 L45.4 33.6 L42.0 32.0 L40.7 29.1 L40.1 26.0 L40.6 22.9 L42.9 20.5 L44.5 17.4 L48.6 17.3 L52.0 16.5 L55.4 17.4 L58.7 18.3 L61.5 20.2 L64.3 22.7Z" fill="#fdf8e6"/><path d="M46.9 46.0 L46.3 47.5 L44.6 48.6 L42.9 50.0 L40.0 49.6 L37.3 49.7 L34.7 49.1 L34.1 47.4 L32.9 46.0 L33.4 44.4 L35.5 43.4 L37.4 42.4 L40.0 41.8 L42.7 42.3 L45.2 43.0 L46.0 44.6Z" fill="#f8dc90"/><path d="M60.1 32.0 L59.5 33.9 L58.3 35.6 L56.2 36.3 L54.0 37.3 L51.6 36.9 L49.6 35.6 L48.8 33.8 L48.0 32.0 L48.6 30.2 L50.0 28.6 L51.5 27.0 L54.0 26.5 L56.1 27.8 L58.5 28.2 L59.7 30.0Z" fill="#f8dc90"/></g><g transform="translate(727,162)"><path d="M99.9 43.0 L99.9 46.1 L99.8 49.5 L97.5 52.0 L95.8 54.6 L93.7 56.9 L90.7 58.0 L88.2 59.9 L85.2 61.0 L82.0 61.6 L79.0 59.9 L76.0 59.5 L73.4 57.8 L70.0 57.3 L67.9 54.8 L67.3 51.5 L64.1 49.5 L63.3 46.3 L63.7 43.0 L64.0 39.8 L65.8 37.1 L67.3 34.5 L68.2 31.4 L71.0 29.9 L73.3 28.0 L76.0 26.6 L79.1 26.3 L82.0 25.1 L85.1 25.4 L88.4 25.4 L91.0 27.4 L93.8 29.0 L95.8 31.4 L97.9 33.8 L98.8 36.9 L99.3 40.0Z" fill="#f0c030" opacity="0.72"/><path d="M85.9 30.0 L86.3 32.4 L85.8 34.8 L83.4 36.5 L82.0 38.3 L81.5 40.7 L79.6 42.3 L78.8 45.0 L76.3 46.1 L73.8 46.9 L71.2 47.5 L68.7 48.3 L66.0 47.0 L63.4 47.7 L61.1 46.4 L57.8 47.7 L56.7 44.5 L53.2 45.0 L52.8 41.9 L49.7 41.3 L49.1 38.8 L47.8 36.8 L45.6 34.9 L47.7 32.2 L47.4 30.0 L44.9 27.5 L46.7 25.3 L48.7 23.6 L42.3 17.7 L51.1 19.7 L50.2 15.8 L54.2 16.1 L54.5 12.0 L58.1 12.8 L60.5 11.5 L63.3 11.3 L66.0 9.0 L68.7 11.9 L72.1 9.6 L73.1 14.6 L79.3 9.3 L79.1 14.6 L82.9 14.8 L81.5 19.3 L87.9 18.6 L83.3 23.5 L84.5 25.5 L85.4 27.7Z" fill="#f0b028" opacity="0.7"/><path d="M62.3 32.0 L63.4 35.2 L62.8 38.3 L62.3 41.6 L59.2 43.8 L57.7 46.5 L55.6 48.8 L53.6 51.3 L52.1 54.4 L48.4 54.8 L46.1 57.3 L42.6 57.7 L39.5 58.7 L36.3 59.6 L33.0 60.9 L29.6 60.1 L26.6 58.0 L23.3 57.8 L20.4 56.3 L16.4 56.6 L13.7 54.6 L11.1 52.4 L8.8 50.0 L7.0 47.3 L4.8 44.7 L3.9 41.5 L4.5 38.1 L2.1 35.2 L3.0 32.0 L2.4 28.8 L-0.9 24.8 L5.1 22.9 L2.4 18.3 L8.6 17.7 L4.2 10.6 L10.8 11.2 L10.8 6.0 L16.6 7.7 L18.1 3.1 L23.1 5.7 L25.7 2.2 L29.6 4.1 L33.0 0.3 L36.4 3.9 L40.4 1.8 L42.9 5.6 L47.3 4.2 L48.5 9.0 L53.5 8.0 L54.5 11.9 L61.0 11.2 L59.0 16.8 L61.2 19.3 L60.0 23.2 L61.2 26.0 L63.7 28.8Z" fill="#f4c040"/><path d="M59.9 33.0 L61.2 37.1 L60.0 41.2 L59.0 45.3 L55.1 47.9 L52.3 50.9 L49.8 54.5 L45.9 56.5 L41.5 57.2 L37.5 59.2 L33.0 58.7 L28.5 59.4 L24.7 56.8 L20.6 55.5 L15.9 54.9 L13.5 51.1 L10.9 47.9 L7.3 45.2 L6.0 41.1 L6.3 36.9 L4.9 33.0 L4.9 28.9 L7.3 25.2 L7.7 21.0 L11.2 18.3 L13.5 14.9 L17.2 12.8 L20.7 10.5 L23.9 7.1 L28.7 7.6 L33.0 5.7 L37.4 7.5 L41.7 8.0 L46.2 9.0 L49.8 11.6 L52.0 15.3 L55.9 17.6 L58.3 21.0 L58.8 25.2 L59.5 29.1Z" fill="#fef9ee"/><path d="M64.5 40.0 L61.2 43.2 L62.6 47.0 L59.5 49.5 L59.9 53.8 L55.2 54.5 L54.2 58.7 L50.7 60.1 L47.5 62.0 L43.8 63.2 L40.0 61.2 L36.5 61.2 L32.7 61.5 L29.9 59.0 L26.9 57.2 L24.4 55.0 L20.5 53.6 L18.4 50.5 L17.2 47.1 L18.2 43.3 L15.6 40.0 L17.2 36.6 L18.9 33.5 L19.6 30.1 L21.6 27.2 L24.7 25.4 L26.4 22.0 L29.8 20.8 L32.8 18.9 L36.2 17.0 L40.0 17.6 L43.6 18.6 L47.5 18.0 L51.2 19.0 L53.5 22.2 L57.3 23.5 L57.4 27.9 L59.5 30.5 L60.9 33.5 L64.1 36.3Z" fill="#f2b040"/><path d="M55.8 45.0 L55.6 46.8 L54.4 48.5 L52.7 49.8 L50.4 50.6 L48.0 51.2 L45.6 50.4 L43.2 50.0 L42.2 48.2 L40.7 46.8 L40.3 45.0 L40.9 43.3 L41.2 41.3 L43.5 40.3 L45.4 39.0 L48.0 38.5 L50.4 39.6 L53.1 39.8 L54.9 41.3 L55.9 43.1Z" fill="#f8cc70"/></g><g><path d="M23.8 283.0 L25.4 285.6 L24.2 288.0 L22.3 289.8 L19.8 290.9 L18.7 293.8 L15.9 294.7 L13.0 294.0 L10.3 293.7 L8.2 292.1 L6.6 290.3 L4.0 289.6 L1.9 287.9 L2.8 285.1 L-0.1 283.0 L2.2 280.7 L3.1 278.6 L4.9 277.1 L4.4 273.1 L7.4 272.4 L10.0 271.1 L13.0 271.6 L15.3 273.8 L17.9 273.6 L20.5 274.4 L21.3 276.9 L25.3 277.6 L24.2 280.6Z" fill="#e8e4a0" opacity="0.55" filter="url(#blur2)"/><path d="M48.6 296.0 L45.4 298.8 L44.3 301.2 L45.8 306.0 L41.8 305.9 L39.6 307.2 L37.8 310.3 L35.0 309.4 L32.0 311.2 L30.2 307.6 L26.5 308.5 L26.1 304.3 L23.9 302.3 L21.8 299.5 L22.3 296.0 L21.8 292.5 L23.5 289.5 L26.9 288.5 L26.7 283.8 L29.7 283.0 L32.5 283.1 L35.0 283.3 L38.0 280.9 L40.3 283.1 L43.5 283.6 L45.2 286.6 L47.3 289.1 L46.9 292.8Z" fill="#e8e4a0" opacity="0.55" filter="url(#blur2)"/><path d="M30.3 307.0 L30.1 309.0 L29.1 310.9 L25.8 311.4 L25.4 313.4 L23.2 314.0 L21.2 314.9 L19.0 314.1 L17.0 314.1 L14.7 314.1 L13.3 312.7 L11.3 311.9 L11.3 310.0 L10.5 308.6 L8.4 307.0 L9.5 305.3 L10.0 303.5 L10.6 301.7 L13.0 301.0 L15.2 300.7 L16.6 298.5 L19.0 298.8 L21.3 298.8 L23.5 299.5 L26.1 299.9 L26.5 302.2 L28.7 303.3 L28.4 305.3Z" fill="#e8e4a0" opacity="0.5" filter="url(#blur2)"/><path d="M209.9 302.0 L210.0 306.9 L206.4 309.9 L207.6 316.3 L202.9 316.2 L201.4 320.9 L197.7 319.1 L195.0 323.5 L192.2 319.5 L188.5 321.1 L185.7 318.7 L183.2 315.5 L182.6 310.5 L179.9 306.9 L179.0 302.0 L182.9 298.1 L182.3 293.3 L182.5 287.8 L185.6 285.2 L189.0 284.3 L192.1 283.6 L195.0 279.3 L197.7 284.9 L201.5 282.6 L204.6 284.8 L204.8 290.8 L207.0 293.8 L207.9 297.8Z" fill="#f0e060" opacity="0.75" filter="url(#blur2)"/><path d="M177.7 287.0 L178.9 288.5 L177.9 289.9 L175.4 290.4 L175.2 292.2 L173.1 292.6 L170.7 292.0 L169.0 293.8 L167.1 292.4 L165.3 292.1 L163.5 291.6 L161.8 290.8 L161.8 289.3 L159.7 288.4 L159.1 287.0 L160.2 285.7 L160.2 284.2 L161.7 283.1 L162.8 281.9 L165.5 282.1 L167.1 281.4 L169.0 281.1 L170.8 281.8 L173.5 280.8 L174.8 282.1 L175.2 283.7 L177.3 284.3 L177.5 285.7Z" fill="#f0dc60" opacity="0.7" filter="url(#blur2)"/><path d="M194.9 317.0 L192.7 319.0 L191.9 321.0 L191.7 323.4 L188.5 323.8 L187.6 326.8 L184.9 327.5 L182.0 325.6 L179.2 327.3 L176.8 326.0 L174.2 325.1 L171.3 324.1 L169.6 322.0 L170.6 319.2 L168.8 317.0 L169.3 314.6 L169.7 312.0 L173.9 311.6 L173.5 308.2 L177.2 308.7 L179.6 308.3 L182.0 306.7 L184.9 306.3 L187.9 306.8 L189.2 309.5 L192.3 310.2 L191.3 313.3 L195.3 314.5Z" fill="#f0e070" opacity="0.7" filter="url(#blur2)"/><path d="M287.4 332.0 L287.3 332.8 L287.2 333.7 L284.7 334.0 L283.3 334.4 L282.8 335.5 L280.7 335.2 L279.0 335.4 L277.1 335.7 L275.9 334.9 L273.4 335.1 L272.8 334.2 L272.7 333.3 L270.2 332.9 L270.8 332.0 L272.2 331.3 L271.1 330.3 L272.2 329.6 L273.7 329.1 L275.4 328.7 L277.0 328.1 L279.0 329.0 L281.0 328.1 L282.6 328.7 L283.6 329.5 L285.5 329.7 L285.9 330.6 L287.2 331.2Z" fill="#e8c090" opacity="0.55"/><circle cx="310" cy="315" r="2" fill="#e05020"/><path d="M364.9 315.0 L365.2 316.9 L365.8 319.2 L365.4 321.7 L360.5 321.7 L357.9 322.6 L355.2 323.7 L352.0 326.0 L348.9 323.4 L344.4 324.9 L341.4 323.3 L341.3 320.3 L337.4 319.4 L336.7 317.2 L336.6 315.0 L333.3 312.3 L339.9 311.4 L341.9 310.0 L340.3 305.8 L345.3 306.3 L348.9 306.4 L352.0 305.7 L355.4 305.8 L360.2 304.4 L360.8 308.1 L363.1 309.5 L366.9 310.5 L367.9 312.7Z" fill="#a06428" opacity="1"/><path d="M374.8 312.0 L375.0 313.6 L374.8 315.2 L375.3 317.8 L373.4 318.2 L372.3 319.8 L370.3 318.6 L369.0 320.0 L367.2 320.9 L365.9 319.3 L363.9 319.4 L362.7 317.7 L363.0 315.3 L363.5 313.4 L361.3 312.0 L363.2 310.5 L363.9 309.2 L363.0 306.6 L364.0 304.9 L365.6 303.8 L367.2 302.8 L369.0 305.0 L370.3 305.5 L371.6 305.9 L374.2 304.6 L373.6 307.8 L374.4 309.0 L374.5 310.6Z" fill="#9a5a28" opacity="1"/><path d="M365.2 309.0 L365.1 310.9 L364.9 312.8 L362.0 313.7 L361.2 315.5 L359.3 317.1 L356.7 317.8 L354.0 316.2 L351.4 317.2 L349.1 316.5 L347.1 315.3 L344.2 314.7 L344.0 312.5 L343.5 310.8 L341.5 309.0 L342.8 307.1 L344.7 305.7 L345.9 304.3 L347.1 302.8 L349.9 302.8 L351.5 300.9 L354.0 300.4 L356.4 301.4 L359.3 301.0 L361.7 301.9 L362.7 303.9 L364.4 305.3 L363.5 307.4Z" fill="#f0a040" opacity="1"/><path d="M365.1 297.0 L364.9 299.5 L364.6 302.1 L363.3 304.4 L361.4 306.3 L358.6 306.6 L356.7 308.7 L354.0 307.8 L351.6 307.3 L349.6 306.1 L347.1 305.6 L346.0 303.4 L344.5 301.6 L343.0 299.5 L342.4 297.0 L342.7 294.4 L344.9 292.6 L346.2 290.7 L347.5 288.8 L349.2 287.0 L351.4 285.5 L354.0 285.3 L356.7 285.3 L358.9 286.9 L361.0 288.2 L362.2 290.4 L363.5 292.4 L364.1 294.7Z" fill="#f49020" opacity="1"/><path d="M321 288 L329 288 L345 295 L341 301 L332 295Z" fill="#f08a20"/><path d="M434.2 330.0 L434.6 331.7 L433.9 333.3 L433.2 335.0 L430.6 335.0 L430.1 337.5 L427.8 337.0 L426.0 337.7 L424.0 337.5 L421.9 337.4 L421.5 335.0 L420.1 334.1 L418.2 333.3 L417.9 331.6 L417.2 330.0 L418.6 328.5 L417.5 326.4 L421.0 326.5 L420.6 324.0 L422.7 324.0 L424.6 324.5 L426.0 322.5 L427.5 324.4 L429.1 324.4 L430.6 324.9 L431.4 326.2 L432.2 327.4 L432.5 328.7Z" fill="#9a6a30" opacity="1"/><path d="M542.3 317.0 L548.1 320.2 L545.7 323.2 L541.8 325.7 L536.4 327.5 L531.5 329.4 L523.5 326.4 L519.0 329.6 L514.0 327.5 L507.2 328.8 L503.8 326.1 L499.0 324.7 L496.1 322.3 L493.9 319.8 L490.7 317.0 L489.9 313.8 L497.9 312.1 L497.1 308.6 L501.0 306.2 L508.6 306.7 L514.3 307.1 L519.0 305.0 L525.2 304.1 L530.0 306.1 L532.6 308.8 L540.2 308.9 L539.9 312.2 L547.1 313.9Z" fill="#a86838" opacity="0.85"/><path d="M521.8 307.0 L519.0 309.3 L520.1 312.4 L519.1 315.2 L516.6 317.3 L513.1 317.9 L510.2 319.2 L507.0 318.5 L503.9 318.8 L501.6 316.5 L497.8 316.9 L495.7 314.7 L495.2 311.9 L493.8 309.6 L492.0 307.0 L493.6 304.4 L492.6 301.1 L494.5 298.5 L497.4 296.7 L501.7 297.5 L504.3 296.8 L507.0 295.8 L510.0 295.8 L513.4 295.5 L516.6 296.7 L518.2 299.4 L520.1 301.6 L520.9 304.3Z" fill="#e89838" opacity="0.95"/><path d="M514.3 295.0 L513.6 296.7 L513.5 298.7 L511.3 299.5 L510.9 301.6 L508.8 302.0 L507.1 303.0 L505.0 302.4 L503.1 302.5 L501.3 301.8 L499.6 301.0 L497.6 300.3 L496.9 298.4 L495.3 297.0 L495.8 295.0 L496.8 293.3 L496.7 291.4 L497.9 290.0 L499.9 289.3 L501.1 287.7 L503.2 288.1 L505.0 287.2 L507.0 287.1 L509.1 287.5 L511.2 288.1 L512.2 289.9 L512.2 291.9 L513.7 293.2Z" fill="#fce0a0" opacity="1"/><path d="M467 337 Q461 317 471 307 Q479 295 495 295" stroke="#f07a20" stroke-width="7" fill="none" stroke-linecap="round"/><path d="M576.4 332.0 L577.0 333.9 L575.1 335.4 L574.5 337.4 L572.9 339.2 L570.4 340.6 L566.8 339.9 L564.0 340.5 L561.3 339.6 L557.2 341.1 L556.0 338.5 L551.4 338.5 L553.5 335.2 L553.0 333.6 L550.4 332.0 L550.8 330.1 L550.1 327.7 L551.4 325.6 L555.2 324.9 L558.4 324.5 L560.6 322.5 L564.0 323.1 L566.8 324.1 L569.6 324.5 L571.0 326.4 L575.9 325.9 L574.3 328.8 L575.9 330.2Z" fill="#a06a38" opacity="0.85"/><path d="M692.6 322.0 L695.7 325.6 L687.1 326.9 L686.7 330.0 L687.3 335.0 L681.2 335.4 L675.2 333.6 L671.0 335.2 L665.4 337.7 L661.7 334.3 L659.9 330.9 L651.1 332.1 L654.1 327.2 L648.3 325.3 L647.9 322.0 L649.9 318.9 L647.5 314.8 L656.0 314.4 L656.7 310.6 L662.9 311.3 L665.2 305.8 L671.0 310.0 L675.9 308.3 L681.8 307.7 L686.8 309.4 L685.4 314.7 L693.8 315.0 L695.4 318.5Z" fill="#c07a48" opacity="0.7"/><path d="M641 349 Q623 335 625 319 Q627 301 641 297 Q655 291 663 299" stroke="#f2a030" stroke-width="9" fill="none" stroke-linecap="round"/><path d="M633 341 Q625 327 629 315 M647 297 Q657 293 663 301" stroke="#fff6d8" stroke-width="3.5" fill="none" stroke-linecap="round"/><path d="M723.8 325.0 L723.4 325.8 L722.9 326.6 L723.3 327.8 L721.8 328.2 L720.8 328.8 L719.4 329.0 L718.0 328.9 L716.6 329.2 L715.3 328.7 L713.9 328.4 L713.1 327.6 L712.0 326.9 L712.3 325.9 L712.6 325.0 L712.8 324.2 L712.2 323.1 L713.8 322.8 L714.1 321.7 L715.3 321.3 L716.8 321.6 L718.0 320.7 L719.1 321.6 L720.9 321.0 L722.1 321.6 L722.3 322.7 L723.8 323.1 L724.3 324.0Z" fill="#d0a080" opacity="0.6"/><circle cx="821" cy="294" r="9" fill="#f0eca0" opacity="0.7" filter="url(#blur2)"/><circle cx="821" cy="294" r="6" fill="#fffff0"/></g><g transform="translate(0,360)"><rect x="1" y="1" width="40" height="9" fill="#a8e0f8" stroke="#e81010" stroke-width="2"/><rect x="4" y="3.5" width="34" height="4" rx="2" fill="#6cc8f0"/><path d="M21 -3 V13 M13 5.5 H29" stroke="#e81010" stroke-width="2"/></g></svg>
<div class="a" style="left:1414px;top:82px;width:400px;height:445px;background:#5a5a5a;border:1px solid #4c4c4c"></div>
<div class="a" style="left:1415px;top:83px;width:398px;height:23px;background:#3e3e3e;"></div>
<div class="t" style="top:86.84px;font-size:12px;line-height:14px;color:#dedede;left:1417px;">Property grid</div>
<svg style="left:1749px;top:91px" width="10" height="6" viewBox="0 0 10 6"><path d="M0 0 H10 L5 5.5Z" fill="#fff"/></svg>
<svg style="left:1773px;top:88px" width="9" height="13" viewBox="0 0 9 13"><path d="M2 0.8 H7 V7 H8.5 V8.5 H0.5 V7 H2Z" fill="none" stroke="#fff" stroke-width="1.5"/><path d="M4.5 8.5 V12.5" stroke="#fff" stroke-width="1.6"/></svg>
<svg style="left:1795px;top:89px" width="11" height="11" viewBox="0 0 11 11"><path d="M0.8 0.8 L10.2 10.2 M10.2 0.8 L0.8 10.2" stroke="#fff" stroke-width="1.5"/></svg>
<svg style="left:1425px;top:114px" width="16" height="16" viewBox="0 0 16 16"><circle cx="8" cy="8" r="7.6" fill="#ffffff"/><path d="M4 8 L8 4.2 V6.6 H12 V9.4 H8 V11.8Z" fill="#5a5a5a"/></svg>
<svg style="left:1449px;top:114px" width="16" height="16" viewBox="0 0 16 16"><circle cx="8" cy="8" r="7.6" fill="#7a7a7a"/><path d="M12 8 L8 4.2 V6.6 H4 V9.4 H8 V11.8Z" fill="#5a5a5a"/></svg>
<div class="t" style="top:118.84px;font-size:12px;line-height:14px;color:#e6e6e6;font-weight:bold;left:1470px;">No selection</div>
<div class="a" style="left:1425px;top:142px;width:22px;height:22px;background:#6c6c6c;"></div>
<svg style="left:1428px;top:145px" width="16" height="16" viewBox="0 0 16 16"><path d="M1 1 H6 V13 H1Z" fill="none" stroke="#fff" stroke-width="1.6"/><path d="M5 4 H11 L14 7 V15 H5Z" fill="#6c6c6c" stroke="#fff" stroke-width="1.6"/><path d="M8 12.5 L11.5 9" stroke="#fff" stroke-width="1.4"/></svg>
<div class="a" style="left:1452px;top:143px;width:354px;height:21px;background:#353535;border-radius:4px"></div>
<div class="t" style="top:146.84px;font-size:12px;line-height:14px;color:#8c8c8c;font-style:italic;left:1458px;">Search properties</div>
<div class="a" style="left:1415px;top:166px;width:398px;height:289px;background:#474747;"></div>
<div class="t" style="top:172.84px;font-size:12px;line-height:14px;color:#dedede;left:1441px;">Source</div>
<div class="t" style="top:199.84px;font-size:12px;line-height:14px;color:#dedede;left:1441px;">Name</div>
<div class="t" style="top:226.84px;font-size:12px;line-height:14px;color:#dedede;left:1441px;">Texture Region</div>
<div class="t" style="top:253.84px;font-size:12px;line-height:14px;color:#dedede;left:1441px;">Pixels Per Unit</div>
<div class="t" style="top:280.84px;font-size:12px;line-height:14px;color:#dedede;left:1441px;">Orientation</div>
<div class="t" style="top:307.84px;font-size:12px;line-height:14px;color:#dedede;left:1441px;">Center</div>
<div class="t" style="top:334.84px;font-size:12px;line-height:14px;color:#dedede;left:1441px;">Center From Middle</div>
<div class="t" style="top:361.84px;font-size:12px;line-height:14px;color:#dedede;left:1441px;">Border Mode U</div>
<div class="t" style="top:388.84px;font-size:12px;line-height:14px;color:#dedede;left:1441px;">Border Mode V</div>
<div class="t" style="top:415.84px;font-size:12px;line-height:14px;color:#dedede;left:1441px;">Border Color</div>
<div class="a" style="left:1581px;top:170px;width:204px;height:20px;background:#323232;border-radius:3px"></div>
<div class="t" style="top:172.84px;font-size:12px;line-height:14px;color:#e6e6e6;left:1584px;letter-spacing:-0.35px">C:\Users...Resources\SpriteEntity.png</div>
<svg style="left:1790px;top:172px" width="15" height="15" viewBox="0 0 15 15"><path d="M3 0.5 H12.5 V13.5 H3Z" fill="#f0d080" stroke="#c09030" stroke-width="0.8"/><path d="M10 3 V14" stroke="#fff3c0" stroke-width="1"/><path d="M0.5 11 H6 M4 9 L6.3 11 L4 13" stroke="#2a9ae8" stroke-width="1.4" fill="none"/><rect x="11" y="9" width="2" height="4" fill="#2a9ae8"/></svg>
<div class="a" style="left:1581px;top:197px;width:224px;height:19px;background:#323232;border-radius:3px"></div>
<div class="t" style="top:199.84px;font-size:12px;line-height:14px;color:#e6e6e6;left:1584px;">bullet</div>
<div class="a" style="left:1581.0px;top:225px;width:53px;height:17px;background:#323232;border-radius:3px"></div>
<div class="a" style="left:1581.0px;top:225px;width:18px;height:17px;background:#bdbdbd;border-radius:3px 0 0 3px"></div>
<div class="t" style="top:226.84px;font-size:12px;line-height:14px;color:#f4f4f4;left:1390.0px;width:400px;text-align:center;">X</div>
<div class="t" style="top:226.84px;font-size:12px;line-height:14px;color:#e6e6e6;left:1417.0px;width:400px;text-align:center;">0</div>
<div class="a" style="left:1638.5px;top:225px;width:53px;height:17px;background:#323232;border-radius:3px"></div>
<div class="a" style="left:1638.5px;top:225px;width:18px;height:17px;background:#bdbdbd;border-radius:3px 0 0 3px"></div>
<div class="t" style="top:226.84px;font-size:12px;line-height:14px;color:#f4f4f4;left:1447.5px;width:400px;text-align:center;">Y</div>
<div class="t" style="top:226.84px;font-size:12px;line-height:14px;color:#e6e6e6;left:1474.5px;width:400px;text-align:center;">362</div>
<div class="a" style="left:1696.0px;top:225px;width:53px;height:17px;background:#323232;border-radius:3px"></div>
<div class="a" style="left:1696.0px;top:225px;width:18px;height:17px;background:#bdbdbd;border-radius:3px 0 0 3px"></div>
<div class="t" style="top:226.84px;font-size:12px;line-height:14px;color:#f4f4f4;left:1505.0px;width:400px;text-align:center;">W</div>
<div class="t" style="top:226.84px;font-size:12px;line-height:14px;color:#e6e6e6;left:1532.0px;width:400px;text-align:center;">40</div>
<div class="a" style="left:1753.5px;top:225px;width:53px;height:17px;background:#323232;border-radius:3px"></div>
<div class="a" style="left:1753.5px;top:225px;width:18px;height:17px;background:#bdbdbd;border-radius:3px 0 0 3px"></div>
<div class="t" style="top:226.84px;font-size:12px;line-height:14px;color:#f4f4f4;left:1562.5px;width:400px;text-align:center;">H</div>
<div class="t" style="top:226.84px;font-size:12px;line-height:14px;color:#e6e6e6;left:1589.5px;width:400px;text-align:center;">6</div>
<div class="a" style="left:1581px;top:252px;width:224px;height:18px;background:#323232;border-radius:3px"></div>
<div class="t" style="top:253.84px;font-size:12px;line-height:14px;color:#e6e6e6;left:1584px;">100</div>
<svg style="left:1793px;top:253px" width="10" height="16" viewBox="0 0 10 16"><path d="M1 6 L5 2 L9 6Z M1 10 L5 14 L9 10Z" fill="#777"/></svg>
<div class="a" style="left:1580px;top:278px;width:226px;height:18px;background:#323232;border-radius:3px"></div>
<div class="t" style="top:280.84px;font-size:12px;line-height:14px;color:#e6e6e6;left:1583px;">AsIs</div>
<div class="a" style="left:1791px;top:279px;width:14px;height:16px;background:#7a7a7a;border-radius:3px"></div>
<svg style="left:1793px;top:284px" width="10" height="6" viewBox="0 0 10 6"><path d="M1.5 1 L5 4.5 L8.5 1" stroke="#fff" stroke-width="1.8" fill="none"/></svg>
<div class="a" style="left:1581px;top:305px;width:101px;height:18px;background:#323232;border-radius:3px"></div>
<div class="a" style="left:1581px;top:305px;width:18px;height:18px;background:#d94848;border-radius:3px 0 0 3px"></div>
<div class="t" style="top:307.84px;font-size:12px;line-height:14px;color:#fff;left:1390px;width:400px;text-align:center;">X</div>
<div class="t" style="top:307.84px;font-size:12px;line-height:14px;color:#e6e6e6;left:1440px;width:400px;text-align:center;">0</div>
<div class="a" style="left:1687px;top:305px;width:102px;height:18px;background:#323232;border-radius:3px"></div>
<div class="a" style="left:1687px;top:305px;width:18px;height:18px;background:#5cbc5c;border-radius:3px 0 0 3px"></div>
<div class="t" style="top:307.84px;font-size:12px;line-height:14px;color:#fff;left:1496px;width:400px;text-align:center;">Y</div>
<div class="t" style="top:307.84px;font-size:12px;line-height:14px;color:#e6e6e6;left:1547px;width:400px;text-align:center;">0</div>
<svg style="left:1793px;top:307px" width="14" height="15" viewBox="0 0 14 15"><path d="M6 7 V4 Q6 1 9 1 Q12 1 12 4 V5" fill="none" stroke="#e8b030" stroke-width="1.6"/><rect x="1" y="7" width="9" height="7" fill="#e8b030"/><path d="M1 9.5 H10 M1 12 H10" stroke="#a87010" stroke-width="0.8"/></svg>
<div class="a" style="left:1581px;top:335px;width:13px;height:13px;background:#5c5c5c;border:1px solid #6a6a6a"></div>
<svg style="left:1581px;top:335px" width="13" height="13" viewBox="0 0 13 13"><path d="M3 7 L5.5 10 L10.5 2.5" stroke="#e8e8e8" stroke-width="1.5" fill="none"/></svg>
<div class="a" style="left:1580px;top:358px;width:226px;height:19px;background:#323232;border-radius:3px"></div>
<div class="t" style="top:360.84px;font-size:12px;line-height:14px;color:#e6e6e6;left:1583px;">Clamp</div>
<div class="a" style="left:1791px;top:359px;width:14px;height:17px;background:#7a7a7a;border-radius:3px"></div>
<svg style="left:1793px;top:364px" width="10" height="6" viewBox="0 0 10 6"><path d="M1.5 1 L5 4.5 L8.5 1" stroke="#fff" stroke-width="1.8" fill="none"/></svg>
<div class="a" style="left:1580px;top:385px;width:226px;height:19px;background:#323232;border-radius:3px"></div>
<div class="t" style="top:387.84px;font-size:12px;line-height:14px;color:#e6e6e6;left:1583px;">Clamp</div>
<div class="a" style="left:1791px;top:386px;width:14px;height:17px;background:#7a7a7a;border-radius:3px"></div>
<svg style="left:1793px;top:391px" width="10" height="6" viewBox="0 0 10 6"><path d="M1.5 1 L5 4.5 L8.5 1" stroke="#fff" stroke-width="1.8" fill="none"/></svg>
<div class="a" style="left:1581px;top:413px;width:20px;height:20px;background:#333;border:1px solid #111"></div>
<div class="a" style="left:1607px;top:413px;width:198px;height:19px;background:#323232;border-radius:3px"></div>
<div class="t" style="top:415.84px;font-size:12px;line-height:14px;color:#e6e6e6;left:1610px;">#00000000</div>
<div class="a" style="left:1414px;top:530px;width:400px;height:200px;background:#333;border:1px solid #5a5a5a"></div>
<div class="a" style="left:1415px;top:531px;width:398px;height:23px;background:#3e3e3e;"></div>
<div class="t" style="top:534.84px;font-size:12px;line-height:14px;color:#dedede;left:1417px;">Asset preview</div>
<svg style="left:1749px;top:539px" width="10" height="6" viewBox="0 0 10 6"><path d="M0 0 H10 L5 5.5Z" fill="#fff"/></svg>
<svg style="left:1773px;top:536px" width="9" height="13" viewBox="0 0 9 13"><path d="M2 0.8 H7 V7 H8.5 V8.5 H0.5 V7 H2Z" fill="none" stroke="#fff" stroke-width="1.5"/><path d="M4.5 8.5 V12.5" stroke="#fff" stroke-width="1.6"/></svg>
<svg style="left:1795px;top:537px" width="11" height="11" viewBox="0 0 11 11"><path d="M0.8 0.8 L10.2 10.2 M10.2 0.8 L0.8 10.2" stroke="#fff" stroke-width="1.5"/></svg>
<div class="a" style="left:1414px;top:730px;width:85px;height:20px;background:#999;"></div>
<div class="a" style="left:1499px;top:730px;width:152px;height:20px;background:#555;"></div>
<div class="t" style="top:733.84px;font-size:12px;line-height:14px;color:#e8e8e8;left:1420px;">Asset preview</div>
<div class="t" style="top:733.84px;font-size:12px;line-height:14px;color:#e6e6e6;left:1504px;">Action history</div>
<div class="t" style="top:733.84px;font-size:12px;line-height:14px;color:#e6e6e6;left:1588px;">References</div>
<div class="a" style="left:5px;top:538px;width:350px;height:214px;background:#333;border:1px solid #4c4c4c"></div>
<div class="a" style="left:6px;top:539px;width:348px;height:48px;background:#3e3e3e;"></div>
<div class="t" style="top:542.84px;font-size:12px;line-height:14px;color:#dedede;left:8px;">Solution explorer</div>
<svg style="left:291px;top:547px" width="10" height="6" viewBox="0 0 10 6"><path d="M0 0 H10 L5 5.5Z" fill="#fff"/></svg>
<svg style="left:315px;top:544px" width="9" height="13" viewBox="0 0 9 13"><path d="M2 0.8 H7 V7 H8.5 V8.5 H0.5 V7 H2Z" fill="none" stroke="#fff" stroke-width="1.5"/><path d="M4.5 8.5 V12.5" stroke="#fff" stroke-width="1.6"/></svg>
<svg style="left:337px;top:545px" width="11" height="11" viewBox="0 0 11 11"><path d="M0.8 0.8 L10.2 10.2 M10.2 0.8 L0.8 10.2" stroke="#fff" stroke-width="1.5"/></svg>
<div class="a" style="left:13px;top:567px;width:2px;height:2px;background:#2e2e2e;"></div>
<div class="a" style="left:13px;top:571px;width:2px;height:2px;background:#2e2e2e;"></div>
<div class="a" style="left:13px;top:575px;width:2px;height:2px;background:#2e2e2e;"></div>
<div class="a" style="left:13px;top:579px;width:2px;height:2px;background:#2e2e2e;"></div>
<svg style="left:22px;top:567px" width="16" height="16" viewBox="0 0 16 16"><rect x="1" y="0.5" width="10" height="3.4" rx="1" fill="#d6d6de" stroke="#777" stroke-width="0.6"/><rect x="1" y="4.3" width="10" height="3.4" rx="1" fill="#cfd6d2" stroke="#777" stroke-width="0.6"/><rect x="1" y="8.1" width="10" height="3.4" rx="1" fill="#d4dcd6" stroke="#777" stroke-width="0.6"/><rect x="1" y="11.9" width="10" height="3.4" rx="1" fill="#cdd8d0" stroke="#777" stroke-width="0.6"/><path d="M12 9 L13 11.5 L15.5 12 L13 13 L12 15.5 L11 13 L8.5 12 L11 11.5Z" fill="#ffee44"/></svg>
<svg style="left:45px;top:567px" width="16" height="16" viewBox="0 0 16 16"><rect x="0.7" y="0.7" width="10" height="14" fill="#f2d27e" stroke="#b8862a" stroke-width="1"/><path d="M12 9 L13 11.5 L15.5 12 L13 13 L12 15.5 L11 13 L8.5 12 L11 11.5Z" fill="#ffee44"/></svg>
<svg style="left:81px;top:566px" width="17" height="16" viewBox="0 0 17 16"><rect x="1" y="5" width="11" height="10.5" fill="#f4f4f4" stroke="#222" stroke-width="0.8"/><circle cx="3" cy="9" r="0.9" fill="#2a2"/><circle cx="3" cy="11" r="0.9" fill="#c33"/><circle cx="3" cy="13" r="0.9" fill="#36c"/><path d="M4.5 9 H10 M4.5 11 H10 M4.5 13 H10" stroke="#aaa" stroke-width="0.7"/><path d="M3.5 5 L7 1 H14 L16 3 L11 7.5 L7.5 8Z" fill="#d8a060"/></svg>
<svg style="left:105px;top:568px" width="16" height="12" viewBox="0 0 16 12"><rect x="1" y="2.5" width="14.5" height="7" fill="#e8e8e8" stroke="#111" stroke-width="1"/><path d="M3 0.5 V11.5 M1.5 0.5 H4.5 M1.5 11.5 H4.5" stroke="#111" stroke-width="1"/></svg>
<svg style="left:130px;top:568px" width="14" height="12" viewBox="0 0 14 12"><path d="M1.5 1 Q7 5 12.5 11 M12.5 0.5 Q6 5.5 1.5 11" stroke="#e01818" stroke-width="2.2" fill="none"/></svg>
<svg style="left:166px;top:566px" width="16" height="16" viewBox="0 0 16 16"><path d="M3.5 0 V8 M3.5 4.5 H8" stroke="#111" stroke-width="1" stroke-dasharray="1 1"/><rect x="9" y="1.5" width="5.5" height="6" fill="#f0cf7c" stroke="#b8862a" stroke-width="0.8"/><rect x="9" y="9.5" width="5.5" height="6" fill="#f0cf7c" stroke="#b8862a" stroke-width="0.8"/><circle cx="5.5" cy="12" r="4.3" fill="#e8ecf4" stroke="#3a60e0" stroke-width="1.2"/><path d="M2.5 12 H8.5 M5.5 9 V15" stroke="#1b3fb0" stroke-width="1.6"/></svg>
<svg style="left:190px;top:566px" width="16" height="16" viewBox="0 0 16 16"><path d="M3.5 0 V8 M3.5 4.5 H8" stroke="#111" stroke-width="1" stroke-dasharray="1 1"/><rect x="9" y="1.5" width="5.5" height="6" fill="#f2f6f6" stroke="#2a4a4a" stroke-width="0.8"/><rect x="9" y="9.5" width="5.5" height="6" fill="#f2f6f6" stroke="#2a4a4a" stroke-width="0.8"/><circle cx="5.5" cy="12" r="4.3" fill="#e8ecf4" stroke="#3a60e0" stroke-width="1.2"/><path d="M2.5 12 H8.5 M5.5 9 V15" stroke="#1b3fb0" stroke-width="1.6"/></svg>
<svg style="left:214px;top:566px" width="16" height="16" viewBox="0 0 16 16"><path d="M3.5 0 V8 M3.5 4.5 H8" stroke="#111" stroke-width="1" stroke-dasharray="1 1"/><rect x="9" y="1.5" width="5.5" height="6" fill="#f2f6f6" stroke="#2a4a4a" stroke-width="0.8"/><rect x="9" y="9.5" width="5.5" height="6" fill="#f2f6f6" stroke="#2a4a4a" stroke-width="0.8"/><circle cx="5.5" cy="12" r="4.3" fill="#e8ecf4" stroke="#3a60e0" stroke-width="1.2"/><path d="M2.5 12 H8.5" stroke="#1b3fb0" stroke-width="1.6"/></svg>
<svg style="left:253px;top:566px" width="15" height="16" viewBox="0 0 15 16"><path d="M0.5 1 H5 L10 3 V15 L5 13 H0.5Z" fill="#e8c470" stroke="#b8862a" stroke-width="0.8"/><path d="M5 1 H11 V11" fill="#f4dc98" stroke="#b8862a" stroke-width="0.8"/><circle cx="11.5" cy="10" r="2.6" fill="#cfe4f0" stroke="#ddd" stroke-width="0.8"/><path d="M9.5 12 L7 15" stroke="#ddd" stroke-width="1.2"/></svg>
<svg style="left:8px;top:597px" width="12" height="7" viewBox="0 0 12 7"><path d="M0 0 H12 L6.0 7Z" fill="#d8d8d8"/></svg>
<div class="t" style="top:593.84px;font-size:12px;line-height:14px;color:#e2e2e2;left:24px;">Solution &#x27;SpriteStudioDemo2&#x27;</div>
<div class="a" style="left:7px;top:612px;width:328px;height:24px;background:#9a9a9a;"></div>
<svg style="left:18px;top:621px" width="12" height="7" viewBox="0 0 12 7"><path d="M0 0 H12 L6.0 7Z" fill="#cfcfcf"/></svg>
<svg style="left:36px;top:617px" width="12" height="16" viewBox="0 0 12 16"><rect x="1" y="0.5" width="10" height="3.4" rx="1" fill="#d6d6de" stroke="#777" stroke-width="0.6"/><rect x="1" y="4.3" width="10" height="3.4" rx="1" fill="#cfd6d2" stroke="#777" stroke-width="0.6"/><rect x="1" y="8.1" width="10" height="3.4" rx="1" fill="#d4dcd6" stroke="#777" stroke-width="0.6"/><rect x="1" y="11.9" width="10" height="3.4" rx="1" fill="#cdd8d0" stroke="#777" stroke-width="0.6"/></svg>
<div class="t" style="top:617.84px;font-size:12px;line-height:14px;color:#f0f0f0;font-weight:bold;left:55px;">SpriteStudioDemo2*</div>
<svg style="left:44px;top:642px" width="16" height="14" viewBox="0 0 16 14"><path d="M0.5 1 H6 L7 2.5 H15.5 V13.5 H0.5Z" fill="#e8c470" stroke="#b8862a" stroke-width="0.8"/><rect x="3" y="6" width="10" height="7" fill="#f8f0d8"/><rect x="4" y="8" width="8" height="5" fill="#e0b860"/></svg>
<div class="t" style="top:641.84px;font-size:12px;line-height:14px;color:#e2e2e2;left:65px;">Assets*</div>
<svg style="left:31px;top:665px" width="7" height="12" viewBox="0 0 7 12"><path d="M0 0 L7 6 L0 12Z" fill="#d8d8d8"/></svg>
<svg style="left:46px;top:664px" width="13" height="16" viewBox="0 0 13 16"><path d="M0.5 0.5 H9 L12.5 4 V15.5 H0.5Z" fill="#eef2fa" stroke="#8aa" stroke-width="0.8"/><text x="2.5" y="12" font-size="9" font-family="Liberation Sans" fill="#3050a0">#</text></svg>
<div class="t" style="top:665.84px;font-size:12px;line-height:14px;color:#e2e2e2;left:65px;">SpriteStudioDemo2.Game</div>
<svg style="left:45px;top:688px" width="14" height="14" viewBox="0 0 14 14"><circle cx="7" cy="7" r="6.5" fill="#2a5db0" stroke="#12306a" stroke-width="0.8"/><path d="M3.5 4 L6.7 3.3 V6.7 H3.5Z" fill="#f25022"/><path d="M7.3 3.2 L10.5 2.8 V6.7 H7.3Z" fill="#7fba00"/><path d="M3.5 7.3 H6.7 V10.7 L3.5 10Z" fill="#00a4ef"/><path d="M7.3 7.3 H10.5 V11.2 L7.3 10.8Z" fill="#ffb900"/></svg>
<div class="t" style="top:689.84px;font-size:12px;line-height:14px;color:#e2e2e2;left:65px;">SpriteStudioDemo2.Windows</div>
<svg style="left:31px;top:713px" width="7" height="12" viewBox="0 0 7 12"><path d="M0 0 L7 6 L0 12Z" fill="#d8d8d8"/></svg>
<svg style="left:44px;top:712px" width="16" height="16" viewBox="0 0 16 16"><rect x="0.5" y="6" width="6" height="9" fill="#d4ded6" stroke="#666" stroke-width="0.7"/><rect x="9" y="1" width="6" height="5" fill="#d4ded6" stroke="#666" stroke-width="0.7"/><rect x="9" y="9" width="6" height="5" fill="#d4ded6" stroke="#666" stroke-width="0.7"/><path d="M6.5 8 H9 M8 3.5 V11.5 H9" stroke="#333" stroke-width="1" fill="none"/></svg>
<div class="t" style="top:713.84px;font-size:12px;line-height:14px;color:#e2e2e2;left:65px;">Dependencies</div>
<svg style="left:12px;top:737px" width="7" height="12" viewBox="0 0 7 12"><path d="M0 0 L7 6 L0 12Z" fill="#d8d8d8"/></svg>
<div class="t" style="top:737.84px;font-size:12px;line-height:14px;color:#e2e2e2;left:24px;">External Packages</div>
<div class="a" style="left:6px;top:750px;width:331px;height:1px;background:#333;"></div>
<div class="a" style="left:5px;top:751px;width:350px;height:1px;background:#4c4c4c;"></div>
<div class="a" style="left:5px;top:752px;width:350px;height:4px;background:#333;"></div>
<div class="a" style="left:337px;top:587px;width:17px;height:164px;background:#5a5a5a;"></div>
<svg style="left:340px;top:590px" width="11" height="9" viewBox="0 0 11 9"><path d="M0.5 8.5 L5.5 0.5 L10.5 8.5Z" fill="#7e7e7e"/></svg>
<svg style="left:340px;top:738px" width="11" height="9" viewBox="0 0 11 9"><path d="M0.5 0.5 L5.5 8.5 L10.5 0.5Z" fill="#7e7e7e"/></svg>
<div class="a" style="left:341px;top:603px;width:8px;height:128px;background:#8a8a8a;border-radius:4px"></div>
<div class="a" style="left:359px;top:538px;width:1051px;height:192px;background:#333;border:1px solid #4c4c4c"></div>
<div class="a" style="left:360px;top:539px;width:1049px;height:23px;background:#3e3e3e;"></div>
<div class="t" style="top:542.84px;font-size:12px;line-height:14px;color:#dedede;left:362px;">Asset view</div>
<svg style="left:1344px;top:547px" width="10" height="6" viewBox="0 0 10 6"><path d="M0 0 H10 L5 5.5Z" fill="#fff"/></svg>
<svg style="left:1368px;top:544px" width="9" height="13" viewBox="0 0 9 13"><path d="M2 0.8 H7 V7 H8.5 V8.5 H0.5 V7 H2Z" fill="none" stroke="#fff" stroke-width="1.5"/><path d="M4.5 8.5 V12.5" stroke="#fff" stroke-width="1.6"/></svg>
<svg style="left:1390px;top:545px" width="11" height="11" viewBox="0 0 11 11"><path d="M0.8 0.8 L10.2 10.2 M10.2 0.8 L0.8 10.2" stroke="#fff" stroke-width="1.5"/></svg>
<div class="a" style="left:361px;top:562px;width:1047px;height:34px;background:#434343;border-top:1px solid #525252"></div>
<div class="a" style="left:368px;top:569px;width:2px;height:2px;background:#2e2e2e;"></div>
<div class="a" style="left:368px;top:573px;width:2px;height:2px;background:#2e2e2e;"></div>
<div class="a" style="left:368px;top:577px;width:2px;height:2px;background:#2e2e2e;"></div>
<div class="a" style="left:368px;top:581px;width:2px;height:2px;background:#2e2e2e;"></div>
<div class="a" style="left:368px;top:585px;width:2px;height:2px;background:#2e2e2e;"></div>
<svg style="left:377px;top:569px" width="20" height="20" viewBox="0 0 20 20"><path d="M10 1 V19 M1 10 H19" stroke="#fff" stroke-width="5" stroke-linecap="round"/></svg>
<div class="t" style="top:572.84px;font-size:12px;line-height:14px;color:#f0f0f0;left:401px;">Add asset</div>
<svg style="left:465px;top:570px" width="24" height="22" viewBox="0 0 24 22"><path d="M9 4 H2 V20 H18 V13" stroke="#777777" stroke-width="2.6" fill="none"/><path d="M10 12 L15.5 6.5 M10 12 V7.5 M10 12 H14.5" stroke="#777777" stroke-width="2" fill="none"/><path d="M13 3.5 Q18 0 21.5 4 Q23.5 8 20 11" stroke="#777777" stroke-width="2" fill="none"/></svg>
<svg style="left:497px;top:569px" width="24" height="20" viewBox="0 0 24 20"><circle cx="11" cy="2.5" r="1.5" fill="#777777"/><path d="M5 7 Q11 3 17 7Z" fill="#777777"/><path d="M4 8 H18 Q20 10 22 6.5 L23 7.5 Q20 12 17 18 H6 Q3 17 1.5 13 Q1 10 4 10" fill="#777777"/><circle cx="3.5" cy="12.5" r="2.2" fill="#434343"/></svg>
<svg style="left:541px;top:567px" width="26" height="25" viewBox="0 0 26 25"><path d="M2 23.5 L4 16.5 L18 2.5 L23 7.5 L9 21.5Z M5.5 18 L8 20.5" stroke="#777777" stroke-width="2" fill="none" stroke-linejoin="round"/><path d="M19 1.5 L24 6.5" stroke="#777777" stroke-width="3"/></svg>
<svg style="left:587px;top:573px" width="23" height="14" viewBox="0 0 23 14"><path d="M0.5 7 Q11.5 -4 22.5 7 Q11.5 18 0.5 7Z" fill="#fff"/><circle cx="11.5" cy="7" r="4" fill="#434343"/><circle cx="11.5" cy="7" r="2.2" fill="#fff"/></svg>
<div class="a" style="left:616px;top:569px;width:118px;height:20px;background:#333;border-radius:4px"></div>
<div class="t" style="top:572.84px;font-size:12px;line-height:14px;color:#9a9a9a;font-style:italic;left:622px;">Add a filter...</div>
<div class="a" style="left:361px;top:596px;width:1029px;height:133px;overflow:hidden">
<div class="a" style="left:3px;top:4px;width:115px;height:140px;background:#434343;"></div>
<div class="a" style="left:10px;top:10px;width:100px;height:100px;background:#1c1c1c;border-radius:1px"></div>
<svg style="left:11px;top:11px;overflow:hidden" width="98" height="98" viewBox="0 0 98 98">
<defs><linearGradient id="sky" x1="0" y1="0" x2="0" y2="1"><stop offset="0" stop-color="#4a86e2"/><stop offset="1" stop-color="#b8def4"/></linearGradient></defs>
<rect x="0" y="0" width="98" height="98" fill="url(#sky)" stroke="#1a1a1a" stroke-width="1.5"/>
<path d="M12 18 Q14 10 22 11 Q27 3 35 8 Q42 9 43 18Z" fill="#d8e6f6"/>
<path d="M0 22 Q4 16 7 22Z" fill="#e6eef8"/>
<path d="M12 36 Q18 28 26 35Z" fill="#dce8f6"/><path d="M55 37 Q62 25 72 37Z" fill="#dce8f6"/>
<path d="M66 66 L74 30 Q78 26 82 32 L90 66Z" fill="#a8a8a8"/>
<g fill="#6aab80"><ellipse cx="19" cy="48" rx="6" ry="9"/><ellipse cx="30" cy="47" rx="6" ry="9"/><ellipse cx="41" cy="48" rx="6" ry="9"/><ellipse cx="64" cy="47" rx="6" ry="9"/></g>
<g fill="#a08a60"><rect x="17" y="54" width="3" height="12"/><rect x="28" y="54" width="3" height="12"/><rect x="39" y="54" width="3" height="12"/><rect x="61" y="54" width="3" height="12"/></g>
<g fill="#3e9a3a"><ellipse cx="8" cy="42" rx="9" ry="12"/><ellipse cx="49" cy="41" rx="7" ry="11"/><ellipse cx="91" cy="41" rx="8" ry="11"/><ellipse cx="58" cy="62" rx="9" ry="7"/><ellipse cx="5" cy="60" rx="8" ry="8"/><ellipse cx="80" cy="63" rx="5" ry="4"/></g>
<g fill="#9a7a30"><rect x="9" y="50" width="4" height="16"/><rect x="47" y="50" width="4" height="16"/><rect x="89" y="50" width="4" height="16"/></g>
<rect x="0" y="65" width="98" height="20" fill="#4aa040"/>
<rect x="0" y="77" width="98" height="10" fill="#2f8a30"/>
<rect x="0" y="86" width="98" height="12" fill="#a8821e"/>
<g fill="#f0f0d0"><circle cx="3" cy="72" r="1.5"/><circle cx="48" cy="71" r="1.5"/><circle cx="82" cy="72" r="1.5"/></g>
</svg>
<div class="t" style="top:111.84px;font-size:12px;line-height:14px;color:#e4e4e4;left:-140.5px;width:400px;text-align:center;">Bkg</div>
<div class="t" style="top:129.84px;font-size:12px;line-height:14px;color:#e4e4e4;font-weight:bold;left:-140px;width:400px;text-align:center;">Texture</div>
<svg style="left:12.5px;top:13.0px" width="9" height="9" viewBox="0 0 9 9"><defs><radialGradient id="gd0" cx="0.4" cy="0.35" r="0.6"><stop offset="0" stop-color="#7cf07c"/><stop offset="1" stop-color="#10a010"/></radialGradient></defs><circle cx="4.5" cy="4.5" r="4.2" fill="url(#gd0)" stroke="#0a6a0a" stroke-width="0.5"/></svg>
<div class="a" style="left:133px;top:4px;width:115px;height:140px;background:#434343;"></div>
<div class="a" style="left:140px;top:10.5px;width:99px;height:99px;background:#404040;border:2px solid #2c2c2c;border-radius:4px"></div>
<svg style="left:169px;top:35px" width="41" height="49" viewBox="0 0 41 49"><path d="M20.5 0.5 L40 12 L20.5 23.5 L1 12Z" fill="#d8b534"/><path d="M0 14.5 L19.5 26 V48 L0 37Z" fill="#c6a63a"/><path d="M21.5 26 L41 14.5 V37 L21.5 48Z" fill="#8c7b3e"/></svg>
<div class="t" style="top:53.84px;font-size:12px;line-height:14px;color:#ffffff;left:-10px;width:400px;text-align:center;font-size:14px;line-height:16px;top:50.5px">Collider Shape</div>
<div class="t" style="top:111.84px;font-size:12px;line-height:14px;color:#e4e4e4;left:-10.5px;width:400px;text-align:center;">Bullet_CS</div>
<div class="t" style="top:129.84px;font-size:12px;line-height:14px;color:#e4e4e4;font-weight:bold;left:-10px;width:400px;text-align:center;">Collider Shape</div>
<svg style="left:143.10000000000002px;top:13.0px" width="9" height="9" viewBox="0 0 9 9"><defs><radialGradient id="gd1" cx="0.4" cy="0.35" r="0.6"><stop offset="0" stop-color="#7cf07c"/><stop offset="1" stop-color="#10a010"/></radialGradient></defs><circle cx="4.5" cy="4.5" r="4.2" fill="url(#gd1)" stroke="#0a6a0a" stroke-width="0.5"/></svg>
<div class="a" style="left:263px;top:4px;width:115px;height:140px;background:#434343;"></div>
<div class="a" style="left:270px;top:10.5px;width:99px;height:99px;background:#404040;border:2px solid #2c2c2c;border-radius:4px"></div>
<svg style="left:306px;top:47px" width="24" height="36" viewBox="0 0 24 36"><ellipse cx="12" cy="34" rx="6" ry="1.5" fill="#222"/><path d="M8 28 L7 32 L10 31Z M15 28 L17 32 L13 31Z" fill="#f0d010"/><ellipse cx="12" cy="16" rx="10.5" ry="14" fill="#f0d418" stroke="#b89a10" stroke-width="0.6"/><ellipse cx="12" cy="27" rx="9" ry="3" fill="#d8b830"/><circle cx="8.5" cy="8" r="1" fill="#222"/><circle cx="15" cy="8" r="1" fill="#222"/><path d="M9 10.5 Q12 14 15 10.5Z" fill="#e878a8"/></svg>
<div class="t" style="top:111.84px;font-size:12px;line-height:14px;color:#e4e4e4;left:120px;width:400px;text-align:center;">character_</div>
<div class="t" style="top:129.84px;font-size:12px;line-height:14px;color:#e4e4e4;left:120px;width:400px;text-align:center;">template2</div>
<svg style="left:273.1px;top:13.0px" width="9" height="9" viewBox="0 0 9 9"><defs><radialGradient id="gd2" cx="0.4" cy="0.35" r="0.6"><stop offset="0" stop-color="#7cf07c"/><stop offset="1" stop-color="#10a010"/></radialGradient></defs><circle cx="4.5" cy="4.5" r="4.2" fill="url(#gd2)" stroke="#0a6a0a" stroke-width="0.5"/></svg>
<div class="a" style="left:392px;top:4px;width:115px;height:140px;background:#434343;"></div>
<div class="a" style="left:399px;top:10.5px;width:99px;height:99px;background:#404040;border:2px solid #2c2c2c;border-radius:4px"></div>
<svg style="left:424px;top:36px" width="48" height="48" viewBox="0 0 48 48"><rect x="0" y="0" width="48" height="48" fill="#fff"/><circle cx="5.3" cy="7.2" r="2.8" fill="#404040"/><circle cx="43.2" cy="7.2" r="2.8" fill="#404040"/><circle cx="5.3" cy="15.7" r="2.8" fill="#404040"/><circle cx="43.2" cy="15.7" r="2.8" fill="#404040"/><circle cx="5.3" cy="24.2" r="2.8" fill="#404040"/><circle cx="43.2" cy="24.2" r="2.8" fill="#404040"/><circle cx="5.3" cy="32.7" r="2.8" fill="#404040"/><circle cx="43.2" cy="32.7" r="2.8" fill="#404040"/><circle cx="5.3" cy="41.2" r="2.8" fill="#404040"/><circle cx="43.2" cy="41.2" r="2.8" fill="#404040"/><rect x="10.8" y="6.6" width="27.3" height="15.7" fill="#404040"/><rect x="10.8" y="26.6" width="27.3" height="15.5" fill="#404040"/></svg>
<div class="t" style="top:111.84px;font-size:12px;line-height:14px;color:#e4e4e4;left:249px;width:400px;text-align:center;">character_</div>
<div class="t" style="top:129.84px;font-size:12px;line-height:14px;color:#e4e4e4;left:249px;width:400px;text-align:center;">template2</div>
<svg style="left:402.1px;top:13.0px" width="9" height="9" viewBox="0 0 9 9"><defs><radialGradient id="gd3" cx="0.4" cy="0.35" r="0.6"><stop offset="0" stop-color="#7cf07c"/><stop offset="1" stop-color="#10a010"/></radialGradient></defs><circle cx="4.5" cy="4.5" r="4.2" fill="url(#gd3)" stroke="#0a6a0a" stroke-width="0.5"/></svg>
<div class="a" style="left:522px;top:4px;width:115px;height:140px;background:#434343;"></div>
<div class="a" style="left:529px;top:10.5px;width:99px;height:99px;background:#404040;border:2px solid #2c2c2c;border-radius:4px"></div>
<svg style="left:554px;top:36px" width="48" height="48" viewBox="0 0 48 48"><rect x="0" y="0" width="48" height="48" fill="#fff"/><circle cx="5.3" cy="7.2" r="2.8" fill="#404040"/><circle cx="43.2" cy="7.2" r="2.8" fill="#404040"/><circle cx="5.3" cy="15.7" r="2.8" fill="#404040"/><circle cx="43.2" cy="15.7" r="2.8" fill="#404040"/><circle cx="5.3" cy="24.2" r="2.8" fill="#404040"/><circle cx="43.2" cy="24.2" r="2.8" fill="#404040"/><circle cx="5.3" cy="32.7" r="2.8" fill="#404040"/><circle cx="43.2" cy="32.7" r="2.8" fill="#404040"/><circle cx="5.3" cy="41.2" r="2.8" fill="#404040"/><circle cx="43.2" cy="41.2" r="2.8" fill="#404040"/><rect x="10.8" y="6.6" width="27.3" height="15.7" fill="#404040"/><rect x="10.8" y="26.6" width="27.3" height="15.5" fill="#404040"/></svg>
<div class="t" style="top:111.84px;font-size:12px;line-height:14px;color:#e4e4e4;left:379px;width:400px;text-align:center;">character_</div>
<div class="t" style="top:129.84px;font-size:12px;line-height:14px;color:#e4e4e4;left:379px;width:400px;text-align:center;">template2</div>
<svg style="left:532.1px;top:13.0px" width="9" height="9" viewBox="0 0 9 9"><defs><radialGradient id="gd4" cx="0.4" cy="0.35" r="0.6"><stop offset="0" stop-color="#7cf07c"/><stop offset="1" stop-color="#10a010"/></radialGradient></defs><circle cx="4.5" cy="4.5" r="4.2" fill="url(#gd4)" stroke="#0a6a0a" stroke-width="0.5"/></svg>
<div class="a" style="left:651px;top:4px;width:115px;height:140px;background:#434343;"></div>
<div class="a" style="left:658px;top:10.5px;width:99px;height:99px;background:#404040;border:2px solid #2c2c2c;border-radius:4px"></div>
<svg style="left:686px;top:36px" width="36" height="48" viewBox="0 0 36 48"><ellipse cx="21" cy="45" rx="9" ry="2" fill="#222"/><path d="M15 34 L13 44 H16 L18 36 L22 36 L26 44 H29 L25 34Z" fill="#f0e8e0"/><path d="M12 43 H16 V46 H11Z M25 43 H29 L30 46 H26Z" fill="#b05a28"/><path d="M14 28 L27 28 L29 36 L13 36Z" fill="#6890c8"/><path d="M15 20 H26 L27 29 H14Z" fill="#f4f4f8"/><circle cx="20" cy="13" r="8" fill="#f8e8e0"/><path d="M11 14 Q10 3 20 3 Q30 3 29 14 L27 20 Q27 9 20 8 Q13 9 13 20Z" fill="#f0b020"/><path d="M25 5 Q29 0 31 4" stroke="#f0b020" stroke-width="1.5" fill="none"/><circle cx="23" cy="13" r="1.4" fill="#3080d0"/><path d="M2 30 L15 24 L16 26 L4 32Z" fill="#2a90e0"/></svg>
<div class="t" style="top:111.84px;font-size:12px;line-height:14px;color:#e4e4e4;left:508px;width:400px;text-align:center;">character_</div>
<div class="t" style="top:129.84px;font-size:12px;line-height:14px;color:#e4e4e4;left:508px;width:400px;text-align:center;">template2</div>
<svg style="left:661.0999999999999px;top:13.0px" width="9" height="9" viewBox="0 0 9 9"><defs><radialGradient id="gd5" cx="0.4" cy="0.35" r="0.6"><stop offset="0" stop-color="#7cf07c"/><stop offset="1" stop-color="#10a010"/></radialGradient></defs><circle cx="4.5" cy="4.5" r="4.2" fill="url(#gd5)" stroke="#0a6a0a" stroke-width="0.5"/></svg>
<div class="a" style="left:781px;top:4px;width:115px;height:140px;background:#434343;"></div>
<div class="a" style="left:788px;top:10.5px;width:99px;height:99px;background:#404040;border:2px solid #2c2c2c;border-radius:4px"></div>
<svg style="left:813px;top:36px" width="48" height="48" viewBox="0 0 48 48"><rect x="0" y="0" width="48" height="48" fill="#fff"/><circle cx="5.3" cy="7.2" r="2.8" fill="#404040"/><circle cx="43.2" cy="7.2" r="2.8" fill="#404040"/><circle cx="5.3" cy="15.7" r="2.8" fill="#404040"/><circle cx="43.2" cy="15.7" r="2.8" fill="#404040"/><circle cx="5.3" cy="24.2" r="2.8" fill="#404040"/><circle cx="43.2" cy="24.2" r="2.8" fill="#404040"/><circle cx="5.3" cy="32.7" r="2.8" fill="#404040"/><circle cx="43.2" cy="32.7" r="2.8" fill="#404040"/><circle cx="5.3" cy="41.2" r="2.8" fill="#404040"/><circle cx="43.2" cy="41.2" r="2.8" fill="#404040"/><rect x="10.8" y="6.6" width="27.3" height="15.7" fill="#404040"/><rect x="10.8" y="26.6" width="27.3" height="15.5" fill="#404040"/></svg>
<div class="t" style="top:111.84px;font-size:12px;line-height:14px;color:#e4e4e4;left:638px;width:400px;text-align:center;">character_</div>
<div class="t" style="top:129.84px;font-size:12px;line-height:14px;color:#e4e4e4;left:638px;width:400px;text-align:center;">template2</div>
<svg style="left:791.0999999999999px;top:13.0px" width="9" height="9" viewBox="0 0 9 9"><defs><radialGradient id="gd6" cx="0.4" cy="0.35" r="0.6"><stop offset="0" stop-color="#7cf07c"/><stop offset="1" stop-color="#10a010"/></radialGradient></defs><circle cx="4.5" cy="4.5" r="4.2" fill="url(#gd6)" stroke="#0a6a0a" stroke-width="0.5"/></svg>
<div class="a" style="left:910px;top:4px;width:115px;height:140px;background:#434343;"></div>
<div class="a" style="left:917px;top:10.5px;width:99px;height:99px;background:#404040;border:2px solid #2c2c2c;border-radius:4px"></div>
<svg style="left:942px;top:36px" width="48" height="48" viewBox="0 0 48 48"><rect x="0" y="0" width="48" height="48" fill="#fff"/><circle cx="5.3" cy="7.2" r="2.8" fill="#404040"/><circle cx="43.2" cy="7.2" r="2.8" fill="#404040"/><circle cx="5.3" cy="15.7" r="2.8" fill="#404040"/><circle cx="43.2" cy="15.7" r="2.8" fill="#404040"/><circle cx="5.3" cy="24.2" r="2.8" fill="#404040"/><circle cx="43.2" cy="24.2" r="2.8" fill="#404040"/><circle cx="5.3" cy="32.7" r="2.8" fill="#404040"/><circle cx="43.2" cy="32.7" r="2.8" fill="#404040"/><circle cx="5.3" cy="41.2" r="2.8" fill="#404040"/><circle cx="43.2" cy="41.2" r="2.8" fill="#404040"/><rect x="10.8" y="6.6" width="27.3" height="15.7" fill="#404040"/><rect x="10.8" y="26.6" width="27.3" height="15.5" fill="#404040"/></svg>
<div class="t" style="top:111.84px;font-size:12px;line-height:14px;color:#e4e4e4;left:767px;width:400px;text-align:center;">character_</div>
<div class="t" style="top:129.84px;font-size:12px;line-height:14px;color:#e4e4e4;left:767px;width:400px;text-align:center;">template2</div>
<svg style="left:920.0999999999999px;top:13.0px" width="9" height="9" viewBox="0 0 9 9"><defs><radialGradient id="gd7" cx="0.4" cy="0.35" r="0.6"><stop offset="0" stop-color="#7cf07c"/><stop offset="1" stop-color="#10a010"/></radialGradient></defs><circle cx="4.5" cy="4.5" r="4.2" fill="url(#gd7)" stroke="#0a6a0a" stroke-width="0.5"/></svg>
</div>
<div class="a" style="left:360px;top:729px;width:1049px;height:1px;background:#555;"></div>
<div class="a" style="left:1391px;top:597px;width:14px;height:132px;background:#5a5a5a;"></div>
<svg style="left:1393px;top:600px" width="10" height="8" viewBox="0 0 10 8"><path d="M0.5 7.5 L5 0.5 L9.5 7.5Z" fill="#7e7e7e"/></svg>
<svg style="left:1393px;top:716px" width="10" height="8" viewBox="0 0 10 8"><path d="M0.5 0.5 L5 7.5 L9.5 0.5Z" fill="#7e7e7e"/></svg>
<div class="a" style="left:1394px;top:612px;width:8px;height:42px;background:#8a8a8a;border-radius:4px"></div>
<div class="a" style="left:359px;top:730px;width:67px;height:20px;background:#999;"></div>
<div class="a" style="left:426px;top:730px;width:140px;height:20px;background:#555;"></div>
<div class="t" style="top:733.84px;font-size:12px;line-height:14px;color:#e8e8e8;left:365px;">Asset view</div>
<div class="t" style="top:733.84px;font-size:12px;line-height:14px;color:#e6e6e6;left:431px;">Asset errors (0)</div>
<div class="t" style="top:733.84px;font-size:12px;line-height:14px;color:#e6e6e6;left:522px;">Output</div>
</body></html>
